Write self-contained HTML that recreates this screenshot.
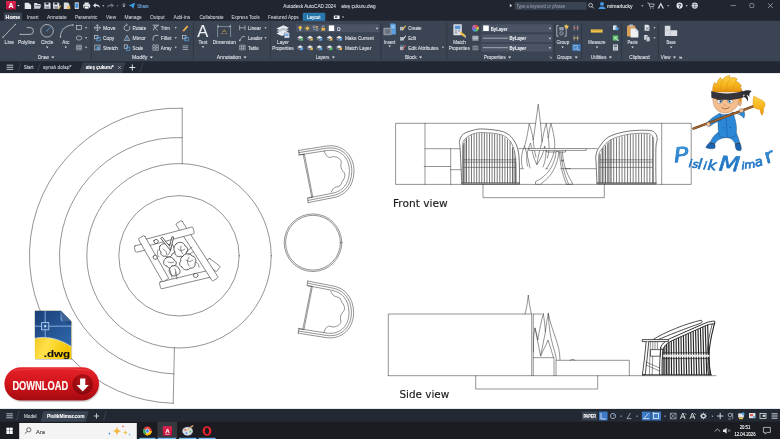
<!DOCTYPE html>
<html lang="tr">
<head>
<meta charset="utf-8">
<title>Autodesk AutoCAD 2024 - ateş çukuru.dwg</title>
<style>
html,body{margin:0;padding:0;background:#fff;overflow:hidden}
body{width:780px;height:439px;position:relative;font-family:'Liberation Sans', Arial, sans-serif}
svg{position:absolute;left:-4px;top:-4px;display:block;will-change:transform;filter:blur(0.35px)}
svg text{font-family:'Liberation Sans', Arial, sans-serif;white-space:pre}

</style>
</head>
<body>
<svg width="788" height="447" viewBox="-4 -4 788 447">
<rect x="-4.00" y="-4.00" width="788.00" height="77.10" fill="#222833" />
<rect x="-4.00" y="-4.00" width="788.00" height="26.00" fill="#20252f" />
<rect x="-4.00" y="20.70" width="788.00" height="40.60" fill="#3b4453" />
<defs><linearGradient id="acad" x1="0" y1="0" x2="0" y2="1"><stop offset="0" stop-color="#e4254f"/><stop offset="1" stop-color="#b80f3a"/></linearGradient></defs>
<rect x="6.10" y="1.00" width="9.70" height="8.60" fill="url(#acad)" />
<text x="11.00" y="7.88" font-size="7" fill="#ffffff" font-weight="bold" text-anchor="middle" stroke="#ffffff" stroke-width="0.1" >A</text>
<path d="M17.20 4.94 L19.60 4.94 L18.40 6.50 Z" fill="#e8eaee"/>
<path d="M24.7 2.7 h4 l2.4 2.2 v4.2 h-6.4 z" stroke="none" stroke-width="0" fill="#e3e6ea" />
<path d="M34.2 3.1 h2.6 l0.8 1 h3 v1 h-5 l-1.4 3.2 z" stroke="none" stroke-width="0" fill="#e3e6ea" />
<path d="M35.0 5.5 h6.4 l-1.6 3.2 h-6.2 z" stroke="none" stroke-width="0" fill="#c9cdd3" />
<path d="M44.3 2.6 h5.2 l1 1 v5.2 h-6.2 z" stroke="none" stroke-width="0" fill="#e3e6ea" />
<rect x="45.60" y="2.60" width="3.00" height="2.00" fill="#20252f" />
<rect x="45.50" y="6.10" width="3.80" height="2.70" fill="#8c94a0" />
<path d="M53.1 2.6 h5.2 l1 1 v5.2 h-6.2 z" stroke="none" stroke-width="0" fill="#e3e6ea" />
<rect x="54.40" y="2.60" width="3.00" height="2.00" fill="#20252f" />
<rect x="54.30" y="6.10" width="3.80" height="2.70" fill="#8c94a0" />
<path d="M57.7 8.7 l2.6 -3.4 l0.9 0.7 l-2.6 3.4 z" stroke="none" stroke-width="0" fill="#f0c060" />
<path d="M63.8 2.5 h4 l1.6 1.6 v4.8 h-5.6 z" stroke="none" stroke-width="0" fill="#d8dbe0" />
<rect x="67.20" y="5.90" width="3.00" height="3.20" fill="#e9b85a" />
<rect x="74.70" y="2.30" width="4.20" height="6.80" fill="#cfd3d9" rx="0.6"/>
<rect x="75.40" y="3.30" width="2.80" height="4.40" fill="#3d8ed8" />
<rect x="84.60" y="2.50" width="4.20" height="2.20" fill="#e3e6ea" />
<rect x="83.20" y="4.30" width="7.00" height="3.40" fill="#e3e6ea" rx="0.6"/>
<rect x="84.60" y="6.30" width="4.20" height="2.60" fill="#ffffff" stroke="#1f2532" stroke-width="0.4"/>
<path d="M93.0 5.4 l2.6 -2.4 v1.5 c3.4 0 4.2 1.6 4.2 3.4 c-0.9 -1.4 -2 -1.8 -4.2 -1.8 v1.6 z" stroke="none" stroke-width="0" fill="#e3e6ea" />
<path d="M102.30 5.35 L104.30 5.35 L103.30 6.65 Z" fill="#c9ced6"/>
<path d="M114.0 5.4 l-2.6 -2.4 v1.5 c-3.4 0 -4.2 1.6 -4.2 3.4 c0.9 -1.4 2 -1.8 4.2 -1.8 v1.6 z" stroke="none" stroke-width="0" fill="#6b7380" />
<path d="M116.40 5.35 L118.40 5.35 L117.40 6.65 Z" fill="#7a8290"/>
<path d="M122.50 5.43 L125.30 5.43 L123.90 7.25 Z" fill="#e3e6ea"/>
<line x1="122.50" y1="4.10" x2="125.30" y2="4.10" stroke="#e3e6ea" stroke-width="0.6" />
<path d="M128.6 5.4 l6.6 -3 l-2 6.6 l-1.6 -2.4 z M128.6 5.4 l3 1.2" stroke="none" stroke-width="0" fill="#3d9be0" />
<text x="137.20" y="7.90" font-size="6.2" fill="#74b2ea" textLength="11.60" lengthAdjust="spacingAndGlyphs" stroke="#74b2ea" stroke-width="0.1" >Share</text>
<text x="283.30" y="7.77" font-size="6.1" fill="#dcdfe4" textLength="52.60" lengthAdjust="spacingAndGlyphs" stroke="#dcdfe4" stroke-width="0.1" >Autodesk AutoCAD 2024</text>
<text x="341.30" y="7.77" font-size="6.1" fill="#dcdfe4" textLength="34.40" lengthAdjust="spacingAndGlyphs" stroke="#dcdfe4" stroke-width="0.1" >ateş çukuru.dwg</text>
<path d="M509.8 3.8 l2.4 1.8 l-2.4 1.8 z" stroke="none" stroke-width="0" fill="#c9ced6" />
<rect x="514.60" y="1.90" width="72.00" height="7.90" fill="#3a4352" />
<text x="516.20" y="7.69" font-size="5.6" fill="#8d95a3" textLength="49.00" lengthAdjust="spacingAndGlyphs" font-style="italic" stroke="#8d95a3" stroke-width="0.1" >Type a keyword or phrase</text>
<circle cx="590.60" cy="5.20" r="1.90" stroke="#d5d9df" stroke-width="0.8" fill="none" />
<line x1="592.00" y1="6.60" x2="593.80" y2="8.40" stroke="#d5d9df" stroke-width="0.9" />
<circle cx="602.00" cy="3.90" r="1.90" stroke="none" stroke-width="0" fill="#4a9be6" />
<path d="M598.4 9 c0 -3.4 7.2 -3.4 7.2 0 z" stroke="none" stroke-width="0" fill="#4a9be6" />
<text x="607.00" y="7.87" font-size="6.1" fill="#e6e8ec" textLength="25.60" lengthAdjust="spacingAndGlyphs" stroke="#e6e8ec" stroke-width="0.1" >mimarlucky</text>
<path d="M641.20 5.29 L643.40 5.29 L642.30 6.73 Z" fill="#c9ced6"/>
<path d="M647.4 3 h1.4 l1 3.6 h3.6 l0.8 -2.6 h-5" stroke="#d5d9df" stroke-width="0.7" fill="none" />
<circle cx="650.40" cy="8.00" r="0.60" stroke="none" stroke-width="0" fill="#d5d9df" />
<circle cx="653.00" cy="8.00" r="0.60" stroke="none" stroke-width="0" fill="#d5d9df" />
<path d="M657.6 8.4 l3.2 -6 l3.2 6 h-1.5 l-1.7 -3.4 l-1.7 3.4 z" stroke="none" stroke-width="0" fill="#d5d9df" />
<path d="M667.10 5.29 L669.30 5.29 L668.20 6.73 Z" fill="#c9ced6"/>
<circle cx="679.60" cy="5.60" r="3.10" stroke="none" stroke-width="0" fill="#e3e6ea" />
<text x="679.60" y="7.55" font-size="5.2" fill="#20252f" font-weight="bold" text-anchor="middle" stroke="#20252f" stroke-width="0.1" >?</text>
<path d="M685.60 5.29 L687.80 5.29 L686.70 6.73 Z" fill="#c9ced6"/>
<circle cx="694.80" cy="5.60" r="3.10" stroke="none" stroke-width="0" fill="#dfe3e8" />
<path d="M692 4.6 h5.4 M692 6.8 h5.4 M694.8 2.6 v6" stroke="#1f2532" stroke-width="0.4" fill="none" />
<line x1="730.60" y1="5.60" x2="736.00" y2="5.60" stroke="#b9bec6" stroke-width="0.6" />
<rect x="749.80" y="3.60" width="4.00" height="4.00" fill="none" stroke="#b9bec6" stroke-width="0.6" rx="0.8"/>
<path d="M768 3.2 l4.8 4.8 M772.8 3.2 l-4.8 4.8" stroke="#c9ced6" stroke-width="0.6" fill="none" />
<rect x="3.80" y="12.60" width="18.20" height="8.20" fill="#3b4453" rx="0.8"/>
<text x="5.60" y="19.20" font-size="6.2" fill="#ffffff" font-weight="bold" textLength="14.60" lengthAdjust="spacingAndGlyphs" stroke="#ffffff" stroke-width="0.1" >Home</text>
<text x="27.00" y="19.20" font-size="6.2" fill="#c5cad3" textLength="11.50" lengthAdjust="spacingAndGlyphs" stroke="#c5cad3" stroke-width="0.1" >Insert</text>
<text x="47.00" y="19.20" font-size="6.2" fill="#c5cad3" textLength="19.70" lengthAdjust="spacingAndGlyphs" stroke="#c5cad3" stroke-width="0.1" >Annotate</text>
<text x="74.90" y="19.20" font-size="6.2" fill="#c5cad3" textLength="22.50" lengthAdjust="spacingAndGlyphs" stroke="#c5cad3" stroke-width="0.1" >Parametric</text>
<text x="106.00" y="19.20" font-size="6.2" fill="#c5cad3" textLength="10.00" lengthAdjust="spacingAndGlyphs" stroke="#c5cad3" stroke-width="0.1" >View</text>
<text x="124.40" y="19.20" font-size="6.2" fill="#c5cad3" textLength="17.40" lengthAdjust="spacingAndGlyphs" stroke="#c5cad3" stroke-width="0.1" >Manage</text>
<text x="150.00" y="19.20" font-size="6.2" fill="#c5cad3" textLength="14.60" lengthAdjust="spacingAndGlyphs" stroke="#c5cad3" stroke-width="0.1" >Output</text>
<text x="173.60" y="19.20" font-size="6.2" fill="#c5cad3" textLength="16.70" lengthAdjust="spacingAndGlyphs" stroke="#c5cad3" stroke-width="0.1" >Add-ins</text>
<text x="199.40" y="19.20" font-size="6.2" fill="#c5cad3" textLength="24.20" lengthAdjust="spacingAndGlyphs" stroke="#c5cad3" stroke-width="0.1" >Collaborate</text>
<text x="231.50" y="19.20" font-size="6.2" fill="#c5cad3" textLength="28.20" lengthAdjust="spacingAndGlyphs" stroke="#c5cad3" stroke-width="0.1" >Express Tools</text>
<text x="268.00" y="19.20" font-size="6.2" fill="#c5cad3" textLength="30.70" lengthAdjust="spacingAndGlyphs" stroke="#c5cad3" stroke-width="0.1" >Featured Apps</text>
<rect x="303.00" y="13.00" width="22.00" height="7.80" fill="#2676ac" rx="0.8" stroke="#3d8cc4" stroke-width="0.4"/>
<text x="307.00" y="19.20" font-size="6.2" fill="#ffffff" textLength="13.60" lengthAdjust="spacingAndGlyphs" stroke="#ffffff" stroke-width="0.1" >Layout</text>
<rect x="333.80" y="15.40" width="5.80" height="3.60" fill="#f0f2f5" rx="0.5"/>
<rect x="335.00" y="16.40" width="2.20" height="1.40" fill="#2a303c" />
<path d="M341.90 16.59 L344.10 16.59 L343.00 18.02 Z" fill="#c9ced6"/>
<line x1="3.00" y1="37.20" x2="15.40" y2="24.40" stroke="#c3c9d2" stroke-width="0.8" />
<circle cx="3.00" cy="37.20" r="0.70" stroke="none" stroke-width="0" fill="#c3c9d2" />
<circle cx="15.40" cy="24.40" r="0.70" stroke="none" stroke-width="0" fill="#c3c9d2" />
<text x="4.60" y="44.00" font-size="6.2" fill="#dfe3e9" textLength="9.50" lengthAdjust="spacingAndGlyphs" stroke="#dfe3e9" stroke-width="0.1" >Line</text>
<path d="M20.4 34.4 h9.6 a3.4 3.4 0 0 0 0 -6.8 h-3.4" stroke="#c3c9d2" stroke-width="0.8" fill="none" />
<circle cx="20.40" cy="34.40" r="0.70" stroke="none" stroke-width="0" fill="#c3c9d2" />
<text x="18.00" y="44.00" font-size="6.2" fill="#dfe3e9" textLength="17.20" lengthAdjust="spacingAndGlyphs" stroke="#dfe3e9" stroke-width="0.1" >Polyline</text>
<circle cx="47.00" cy="30.80" r="6.30" stroke="#c3c9d2" stroke-width="0.8" fill="none" />
<line x1="47.00" y1="30.80" x2="51.20" y2="26.40" stroke="#58a6e8" stroke-width="0.7" />
<circle cx="47.00" cy="30.80" r="0.60" stroke="none" stroke-width="0" fill="#58a6e8" />
<text x="41.10" y="44.00" font-size="6.2" fill="#dfe3e9" textLength="12.20" lengthAdjust="spacingAndGlyphs" stroke="#dfe3e9" stroke-width="0.1" >Circle</text>
<path d="M45.95 46.51 L48.45 46.51 L47.20 48.14 Z" fill="#dfe3e8"/>
<path d="M60.4 37 C60.4 30 66 25 73 25" stroke="#c3c9d2" stroke-width="0.8" fill="none" stroke-dasharray="none"/>
<circle cx="60.40" cy="37.00" r="0.70" stroke="none" stroke-width="0" fill="#c3c9d2" />
<circle cx="73.00" cy="25.00" r="0.70" stroke="none" stroke-width="0" fill="#c3c9d2" />
<circle cx="63.00" cy="28.60" r="0.60" stroke="none" stroke-width="0" fill="#58a6e8" />
<text x="62.30" y="44.00" font-size="6.2" fill="#dfe3e9" textLength="7.00" lengthAdjust="spacingAndGlyphs" stroke="#dfe3e9" stroke-width="0.1" >Arc</text>
<path d="M64.55 46.51 L67.05 46.51 L65.80 48.14 Z" fill="#dfe3e8"/>
<rect x="76.40" y="25.60" width="5.00" height="4.00" fill="none" stroke="#c3c9d2" stroke-width="0.7"/>
<path d="M84.95 27.17 L87.25 27.17 L86.10 28.66 Z" fill="#d5d9df"/>
<ellipse cx="79" cy="38.0" rx="2.8" ry="2.1" fill="none" stroke="#c3c9d2" stroke-width="0.7"/>
<path d="M84.95 37.37 L87.25 37.37 L86.10 38.86 Z" fill="#d5d9df"/>
<path d="M76.4 45.1 h5.2 v4.8 h-5.2 z M76.4 46.7 h5.2 M76.4 48.3 h5.2 M78 45.1 v4.8 M80 45.1 v4.8" stroke="#c3c9d2" stroke-width="0.5" fill="none" />
<path d="M84.95 46.87 L87.25 46.87 L86.10 48.36 Z" fill="#d5d9df"/>
<text x="38.00" y="59.40" font-size="6.2" fill="#dfe3e9" textLength="10.80" lengthAdjust="spacingAndGlyphs" stroke="#dfe3e9" stroke-width="0.1" >Draw</text>
<path d="M51.25 56.55 L54.35 56.55 L52.80 58.56 Z" fill="#dfe3e8"/>
<line x1="91.20" y1="22.50" x2="91.20" y2="60.00" stroke="#2c3340" stroke-width="0.8" />
<path d="M97.4 24.8 v6 M94.4 27.8 h6 M96.30000000000001 25.8 l1.1 -1.2 l1.1 1.2 M96.30000000000001 29.8 l1.1 1.2 l1.1 -1.2 M95.4 26.7 l-1.2 1.1 l1.2 1.1 M99.4 26.7 l1.2 1.1 l-1.2 1.1" stroke="#c3c9d2" stroke-width="0.8" fill="none" />
<text x="103.00" y="30.00" font-size="6.2" fill="#dfe3e9" textLength="12.60" lengthAdjust="spacingAndGlyphs" stroke="#dfe3e9" stroke-width="0.1" >Move</text>
<rect x="94.60" y="35.40" width="3.40" height="3.40" fill="none" stroke="#c3c9d2" stroke-width="0.7"/>
<rect x="96.80" y="37.60" width="3.40" height="3.20" fill="none" stroke="#58a6e8" stroke-width="0.7"/>
<text x="103.00" y="40.20" font-size="6.2" fill="#dfe3e9" textLength="11.20" lengthAdjust="spacingAndGlyphs" stroke="#dfe3e9" stroke-width="0.1" >Copy</text>
<rect x="94.80" y="45.10" width="5.20" height="4.80" fill="none" stroke="#c3c9d2" stroke-width="0.7"/>
<rect x="96.60" y="46.70" width="2.60" height="2.60" fill="#58a6e8" />
<text x="103.00" y="49.70" font-size="6.2" fill="#dfe3e9" textLength="15.00" lengthAdjust="spacingAndGlyphs" stroke="#dfe3e9" stroke-width="0.1" >Stretch</text>
<path d="M129.4 26.2 a2.9 2.9 0 1 1 -2.4 -1.3" stroke="#c3c9d2" stroke-width="0.8" fill="none" />
<path d="M126.2 23.6 l1.4 1.3 l-1.6 1" stroke="#c3c9d2" stroke-width="0.6" fill="none" />
<text x="132.60" y="30.00" font-size="6.2" fill="#dfe3e9" textLength="13.60" lengthAdjust="spacingAndGlyphs" stroke="#dfe3e9" stroke-width="0.1" >Rotate</text>
<path d="M124.2 40.4 l2.8 -5 l2.8 5 z" stroke="#c3c9d2" stroke-width="0.7" fill="none" />
<line x1="127.00" y1="37.00" x2="127.00" y2="40.40" stroke="#58a6e8" stroke-width="0.7" />
<text x="132.60" y="40.20" font-size="6.2" fill="#dfe3e9" textLength="13.20" lengthAdjust="spacingAndGlyphs" stroke="#dfe3e9" stroke-width="0.1" >Mirror</text>
<rect x="124.20" y="44.90" width="3.40" height="3.40" fill="none" stroke="#c3c9d2" stroke-width="0.7"/>
<rect x="126.40" y="47.10" width="3.40" height="3.20" fill="none" stroke="#58a6e8" stroke-width="0.7"/>
<text x="132.60" y="49.70" font-size="6.2" fill="#dfe3e9" textLength="10.60" lengthAdjust="spacingAndGlyphs" stroke="#dfe3e9" stroke-width="0.1" >Scale</text>
<path d="M152.6 25.2 h6 l-3.6 2.4 l2.6 3 M155 25.2 l-1.6 5.2" stroke="#c3c9d2" stroke-width="0.8" fill="none" />
<text x="160.80" y="30.00" font-size="6.2" fill="#dfe3e9" textLength="9.00" lengthAdjust="spacingAndGlyphs" stroke="#dfe3e9" stroke-width="0.1" >Trim</text>
<path d="M174.55 27.17 L176.85 27.17 L175.70 28.66 Z" fill="#d5d9df"/>
<path d="M153.0 40.6 v-2.2 a3 3 0 0 1 3 -3 h2.4" stroke="#c3c9d2" stroke-width="0.8" fill="none" />
<text x="160.80" y="40.20" font-size="6.2" fill="#dfe3e9" textLength="10.60" lengthAdjust="spacingAndGlyphs" stroke="#dfe3e9" stroke-width="0.1" >Fillet</text>
<path d="M174.55 37.37 L176.85 37.37 L175.70 38.86 Z" fill="#d5d9df"/>
<path d="M152.79999999999998 44.9 h2.4 v2.4 h-2.4 z M156.0 44.9 h2.4 v2.4 h-2.4 z M152.79999999999998 47.9 h2.4 v2.4 h-2.4 z M156.0 47.9 h2.4 v2.4 h-2.4 z" stroke="#c3c9d2" stroke-width="0.6" fill="none" />
<text x="160.80" y="49.70" font-size="6.2" fill="#dfe3e9" textLength="10.60" lengthAdjust="spacingAndGlyphs" stroke="#dfe3e9" stroke-width="0.1" >Array</text>
<path d="M174.55 46.87 L176.85 46.87 L175.70 48.36 Z" fill="#d5d9df"/>
<path d="M182.6 30.400000000000002 l4.4 -5 l1.4 1.2 l-4.4 5 z" stroke="none" stroke-width="0" fill="#f0b44a" />
<path d="M182.6 30.400000000000002 l-0.6 1 l1.2 -0.2" stroke="none" stroke-width="0" fill="#e86a5a" />
<rect x="182.60" y="35.40" width="3.40" height="3.40" fill="none" stroke="#c3c9d2" stroke-width="0.7"/>
<rect x="184.80" y="37.60" width="3.40" height="3.20" fill="none" stroke="#58a6e8" stroke-width="0.7"/>
<path d="M182.6 45.9 h5.6 M182.6 47.7 h5.6 M182.6 49.5 h5.6" stroke="#c3c9d2" stroke-width="0.7" fill="none" />
<text x="132.00" y="59.40" font-size="6.2" fill="#dfe3e9" textLength="15.40" lengthAdjust="spacingAndGlyphs" stroke="#dfe3e9" stroke-width="0.1" >Modify</text>
<path d="M149.85 56.55 L152.95 56.55 L151.40 58.56 Z" fill="#dfe3e8"/>
<line x1="193.40" y1="22.50" x2="193.40" y2="60.00" stroke="#2c3340" stroke-width="0.8" />
<text x="202.80" y="37.06" font-size="16.5" fill="#eef0f3" text-anchor="middle" stroke="#eef0f3" stroke-width="0.1" >A</text>
<text x="198.60" y="44.00" font-size="6.2" fill="#dfe3e9" textLength="8.80" lengthAdjust="spacingAndGlyphs" stroke="#dfe3e9" stroke-width="0.1" >Text</text>
<path d="M201.75 46.31 L204.25 46.31 L203.00 47.94 Z" fill="#dfe3e8"/>
<path d="M217.6 24.6 v12.4 M230.6 24.6 v12.4 M217.6 26.6 h13" stroke="#9aa3b0" stroke-width="0.7" fill="none" />
<path d="M219 25.6 l-1.4 1 l1.4 1 z M229.2 25.6 l1.4 1 l-1.4 1 z" stroke="none" stroke-width="0" fill="#c3c9d2" />
<path d="M222.6 30.8 l1 1.2 M224.2 29.6 v1.6 M225.8 30.8 l-1 1.2 M221.6 33.4 h1.6 M225.4 33.4 h1.6" stroke="#f0c24b" stroke-width="0.7" fill="none" />
<text x="212.80" y="44.00" font-size="6.2" fill="#dfe3e9" textLength="23.10" lengthAdjust="spacingAndGlyphs" stroke="#dfe3e9" stroke-width="0.1" >Dimension</text>
<path d="M239.6 25.400000000000002 v4.8 M245 25.400000000000002 v4.8 M239.6 27.8 h5.4" stroke="#c3c9d2" stroke-width="0.7" fill="none" />
<text x="248.00" y="30.00" font-size="6.2" fill="#dfe3e9" textLength="13.00" lengthAdjust="spacingAndGlyphs" stroke="#dfe3e9" stroke-width="0.1" >Linear</text>
<path d="M264.35 27.17 L266.65 27.17 L265.50 28.66 Z" fill="#d5d9df"/>
<path d="M239.8 40.4 l2.4 -3.8 h3" stroke="#c3c9d2" stroke-width="0.7" fill="none" />
<circle cx="239.80" cy="40.40" r="0.80" stroke="none" stroke-width="0" fill="#c3c9d2" />
<text x="248.00" y="40.20" font-size="6.2" fill="#dfe3e9" textLength="14.40" lengthAdjust="spacingAndGlyphs" stroke="#dfe3e9" stroke-width="0.1" >Leader</text>
<path d="M264.35 37.37 L266.65 37.37 L265.50 38.86 Z" fill="#d5d9df"/>
<path d="M239.6 45.1 h5.6 v4.8 h-5.6 z M239.6 46.7 h5.6 M239.6 48.3 h5.6 M241.5 45.1 v4.8 M243.4 45.1 v4.8" stroke="#c3c9d2" stroke-width="0.5" fill="none" />
<text x="248.00" y="49.70" font-size="6.2" fill="#dfe3e9" textLength="10.80" lengthAdjust="spacingAndGlyphs" stroke="#dfe3e9" stroke-width="0.1" >Table</text>
<text x="216.70" y="59.40" font-size="6.2" fill="#dfe3e9" textLength="24.30" lengthAdjust="spacingAndGlyphs" stroke="#dfe3e9" stroke-width="0.1" >Annotation</text>
<path d="M243.45 56.55 L246.55 56.55 L245.00 58.56 Z" fill="#dfe3e8"/>
<line x1="270.40" y1="22.50" x2="270.40" y2="60.00" stroke="#2c3340" stroke-width="0.8" />
<path d="M276.4 28.6 l7 -3.4 l5.6 2.6 l-7 3.4 z" stroke="none" stroke-width="0" fill="#e8ebef" />
<path d="M276.4 31 l7 -3.4 l5.6 2.6 l-7 3.4 z" stroke="none" stroke-width="0" fill="#b9c0ca" />
<path d="M276.4 33.4 l7 -3.4 l5.6 2.6 l-7 3.4 z" stroke="none" stroke-width="0" fill="#e8ebef" />
<rect x="284.20" y="33.00" width="5.20" height="5.00" fill="#dfe3e8" stroke="#4b6ea0" stroke-width="0.5"/>
<rect x="285.20" y="34.40" width="3.20" height="1.40" fill="#4a8fd8" />
<text x="282.90" y="44.00" font-size="6.2" fill="#dfe3e9" text-anchor="middle" textLength="11.60" lengthAdjust="spacingAndGlyphs" stroke="#dfe3e9" stroke-width="0.1" >Layer</text>
<text x="272.30" y="50.30" font-size="6.2" fill="#dfe3e9" textLength="21.30" lengthAdjust="spacingAndGlyphs" stroke="#dfe3e9" stroke-width="0.1" >Properties</text>
<rect x="296.00" y="24.30" width="83.60" height="7.80" fill="#4a5465" />
<circle cx="300.20" cy="27.60" r="1.70" stroke="none" stroke-width="0" fill="#f0c24b" />
<rect x="299.40" y="29.20" width="1.60" height="1.40" fill="#cfd3d9" />
<circle cx="307.40" cy="28.20" r="1.50" stroke="none" stroke-width="0" fill="#f0c24b" />
<path d="M304.59999999999997 28.2 h1 M309.2 28.2 h1 M307.4 25.4 v1 M307.4 30.0 v1 M305.4 26.2 l0.7 0.7 M308.7 29.5 l0.7 0.7 M305.4 30.2 l0.7 -0.7 M308.7 26.9 l0.7 -0.7" stroke="#f0c24b" stroke-width="0.5" fill="none" />
<path d="M313 26 h2 v2 h-2 z M316 28.4 h2 v2 h-2 z M313 29.6 h2" stroke="#c3c9d2" stroke-width="0.5" fill="none" />
<rect x="316.00" y="26.00" width="1.80" height="1.60" fill="#e7b24c" />
<rect x="321.40" y="27.80" width="3.60" height="2.80" fill="#e7b24c" />
<path d="M322.2 27.8 v-1 a1 1 0 0 1 2 0" stroke="#c3c9d2" stroke-width="0.6" fill="none" />
<rect x="328.80" y="25.40" width="5.40" height="5.60" fill="#ffffff" />
<text x="337.00" y="30.50" font-size="6.2" fill="#eef0f3" stroke="#eef0f3" stroke-width="0.1" >0</text>
<path d="M375.70 27.68 L378.30 27.68 L377.00 29.38 Z" fill="#d5d9df"/>
<path d="M297.2 37.4 l3 -1.6 l3 1.6 l-3 1.6 z" stroke="none" stroke-width="0" fill="#dfe3e8" />
<path d="M297.2 38.8 l3 1.6 l3 -1.6" stroke="#c3c9d2" stroke-width="0.5" fill="none" />
<rect x="300.60" y="38.20" width="2.40" height="2.40" fill="#5cc26a" />
<path d="M297.2 46.9 l3 -1.6 l3 1.6 l-3 1.6 z" stroke="none" stroke-width="0" fill="#dfe3e8" />
<path d="M297.2 48.3 l3 1.6 l3 -1.6" stroke="#c3c9d2" stroke-width="0.5" fill="none" />
<rect x="300.60" y="47.70" width="2.40" height="2.40" fill="#58a6e8" />
<path d="M307.0 37.4 l3 -1.6 l3 1.6 l-3 1.6 z" stroke="none" stroke-width="0" fill="#dfe3e8" />
<path d="M307.0 38.8 l3 1.6 l3 -1.6" stroke="#c3c9d2" stroke-width="0.5" fill="none" />
<rect x="310.40" y="38.20" width="2.40" height="2.40" fill="#e7b24c" />
<path d="M307.0 46.9 l3 -1.6 l3 1.6 l-3 1.6 z" stroke="none" stroke-width="0" fill="#dfe3e8" />
<path d="M307.0 48.3 l3 1.6 l3 -1.6" stroke="#c3c9d2" stroke-width="0.5" fill="none" />
<rect x="310.40" y="47.70" width="2.40" height="2.40" fill="#e7b24c" />
<path d="M316.4 37.4 l3 -1.6 l3 1.6 l-3 1.6 z" stroke="none" stroke-width="0" fill="#dfe3e8" />
<path d="M316.4 38.8 l3 1.6 l3 -1.6" stroke="#c3c9d2" stroke-width="0.5" fill="none" />
<rect x="319.80" y="38.20" width="2.40" height="2.40" fill="#58a6e8" />
<path d="M316.4 46.9 l3 -1.6 l3 1.6 l-3 1.6 z" stroke="none" stroke-width="0" fill="#dfe3e8" />
<path d="M316.4 48.3 l3 1.6 l3 -1.6" stroke="#c3c9d2" stroke-width="0.5" fill="none" />
<rect x="319.80" y="47.70" width="2.40" height="2.40" fill="#58a6e8" />
<path d="M326.59999999999997 37.4 l3 -1.6 l3 1.6 l-3 1.6 z" stroke="none" stroke-width="0" fill="#dfe3e8" />
<path d="M326.59999999999997 38.8 l3 1.6 l3 -1.6" stroke="#c3c9d2" stroke-width="0.5" fill="none" />
<rect x="330.00" y="38.20" width="2.40" height="2.40" fill="#e7b24c" />
<path d="M326.59999999999997 46.9 l3 -1.6 l3 1.6 l-3 1.6 z" stroke="none" stroke-width="0" fill="#dfe3e8" />
<path d="M326.59999999999997 48.3 l3 1.6 l3 -1.6" stroke="#c3c9d2" stroke-width="0.5" fill="none" />
<rect x="330.00" y="47.70" width="2.40" height="2.40" fill="#5cc26a" />
<path d="M336.2 37.4 l3 -1.6 l3 1.6 l-3 1.6 z" stroke="none" stroke-width="0" fill="#dfe3e8" />
<path d="M336.2 38.8 l3 1.6 l3 -1.6" stroke="#c3c9d2" stroke-width="0.5" fill="none" />
<rect x="339.60" y="38.20" width="2.40" height="2.40" fill="#58a6e8" />
<path d="M336.2 46.9 l3 -1.6 l3 1.6 l-3 1.6 z" stroke="none" stroke-width="0" fill="#dfe3e8" />
<path d="M336.2 48.3 l3 1.6 l3 -1.6" stroke="#c3c9d2" stroke-width="0.5" fill="none" />
<rect x="339.60" y="47.70" width="2.40" height="2.40" fill="#e7b24c" />
<text x="344.90" y="40.20" font-size="6.2" fill="#dfe3e9" textLength="28.90" lengthAdjust="spacingAndGlyphs" stroke="#dfe3e9" stroke-width="0.1" >Make Current</text>
<text x="344.90" y="49.70" font-size="6.2" fill="#dfe3e9" textLength="26.40" lengthAdjust="spacingAndGlyphs" stroke="#dfe3e9" stroke-width="0.1" >Match Layer</text>
<text x="315.80" y="59.40" font-size="6.2" fill="#dfe3e9" textLength="13.40" lengthAdjust="spacingAndGlyphs" stroke="#dfe3e9" stroke-width="0.1" >Layers</text>
<path d="M331.85 56.55 L334.95 56.55 L333.40 58.56 Z" fill="#dfe3e8"/>
<line x1="380.90" y1="22.50" x2="380.90" y2="60.00" stroke="#2c3340" stroke-width="0.8" />
<path d="M390.2 23.4 h4.2 l1.4 1.4 v9.6 h-5.6 z" stroke="none" stroke-width="0" fill="#5aa0e0" />
<rect x="391.20" y="25.60" width="3.60" height="0.70" fill="#cfe2f6" />
<rect x="391.20" y="27.40" width="3.60" height="0.70" fill="#cfe2f6" />
<rect x="383.40" y="27.80" width="8.20" height="7.40" fill="#8d96a3" rx="0.8"/>
<rect x="384.80" y="29.20" width="5.40" height="4.60" fill="#69727f" />
<text x="383.80" y="44.00" font-size="6.2" fill="#dfe3e9" textLength="11.60" lengthAdjust="spacingAndGlyphs" stroke="#dfe3e9" stroke-width="0.1" >Insert</text>
<path d="M388.45 45.51 L390.95 45.51 L389.70 47.14 Z" fill="#dfe3e8"/>
<rect x="400.00" y="26.80" width="3.60" height="3.60" fill="#aeb6c2" />
<path d="M402.20000000000005 29.2 l3.2 -4 l0.8 0.7 l-3.2 4 z" stroke="none" stroke-width="0" fill="#f0c24b" />
<text x="408.20" y="30.00" font-size="6.2" fill="#dfe3e9" textLength="13.40" lengthAdjust="spacingAndGlyphs" stroke="#dfe3e9" stroke-width="0.1" >Create</text>
<rect x="400.00" y="37.00" width="3.60" height="3.60" fill="#aeb6c2" />
<path d="M402.20000000000005 39.4 l3.2 -4 l0.8 0.7 l-3.2 4 z" stroke="none" stroke-width="0" fill="#e8ebef" />
<text x="408.20" y="40.20" font-size="6.2" fill="#dfe3e9" textLength="7.80" lengthAdjust="spacingAndGlyphs" stroke="#dfe3e9" stroke-width="0.1" >Edit</text>
<rect x="400.00" y="46.50" width="3.60" height="3.60" fill="#aeb6c2" />
<path d="M402.20000000000005 48.9 l3.2 -4 l0.8 0.7 l-3.2 4 z" stroke="none" stroke-width="0" fill="#e0605a" />
<path d="M400.0 44.7 l2 1.6 l2 -1.6" stroke="#58a6e8" stroke-width="0.7" fill="none" />
<text x="408.20" y="49.70" font-size="6.2" fill="#dfe3e9" textLength="30.30" lengthAdjust="spacingAndGlyphs" stroke="#dfe3e9" stroke-width="0.1" >Edit Attributes</text>
<path d="M441.75 46.87 L444.05 46.87 L442.90 48.36 Z" fill="#d5d9df"/>
<text x="404.90" y="59.40" font-size="6.2" fill="#dfe3e9" textLength="11.80" lengthAdjust="spacingAndGlyphs" stroke="#dfe3e9" stroke-width="0.1" >Block</text>
<path d="M419.05 56.55 L422.15 56.55 L420.60 58.56 Z" fill="#dfe3e8"/>
<line x1="446.80" y1="22.50" x2="446.80" y2="60.00" stroke="#2c3340" stroke-width="0.8" />
<rect x="453.40" y="24.20" width="8.40" height="11.00" fill="#dfe3e8" rx="0.6"/>
<rect x="454.80" y="25.60" width="5.60" height="3.60" fill="#5a96d6" />
<rect x="454.80" y="30.40" width="2.40" height="1.00" fill="#7b8594" />
<rect x="458.00" y="30.40" width="2.40" height="1.00" fill="#7b8594" />
<rect x="454.80" y="32.40" width="2.40" height="1.00" fill="#7b8594" />
<path d="M459.6 33.6 l4.6 3.4 l1.4 -1.8 l-4.6 -3.4 z" stroke="none" stroke-width="0" fill="#f0c24b" />
<path d="M464.2 37 l1.6 1 l-0.2 -2.8" stroke="none" stroke-width="0" fill="#e8ebef" />
<text x="459.50" y="44.00" font-size="6.2" fill="#dfe3e9" text-anchor="middle" textLength="12.60" lengthAdjust="spacingAndGlyphs" stroke="#dfe3e9" stroke-width="0.1" >Match</text>
<text x="448.70" y="50.30" font-size="6.2" fill="#dfe3e9" textLength="21.00" lengthAdjust="spacingAndGlyphs" stroke="#dfe3e9" stroke-width="0.1" >Properties</text>
<path d="M475.4 28.2 L475.40 24.70 A3.5 3.5 0 0 1 478.43 26.45 Z" stroke="none" stroke-width="0" fill="#e94b4b" />
<path d="M475.4 28.2 L478.43 26.45 A3.5 3.5 0 0 1 478.43 29.95 Z" stroke="none" stroke-width="0" fill="#f0c24b" />
<path d="M475.4 28.2 L478.43 29.95 A3.5 3.5 0 0 1 475.40 31.70 Z" stroke="none" stroke-width="0" fill="#5cc26a" />
<path d="M475.4 28.2 L475.40 31.70 A3.5 3.5 0 0 1 472.37 29.95 Z" stroke="none" stroke-width="0" fill="#4aa3e8" />
<path d="M475.4 28.2 L472.37 29.95 A3.5 3.5 0 0 1 472.37 26.45 Z" stroke="none" stroke-width="0" fill="#9a5ad8" />
<path d="M475.4 28.2 L472.37 26.45 A3.5 3.5 0 0 1 475.40 24.70 Z" stroke="none" stroke-width="0" fill="#e86aa8" />
<rect x="472.40" y="35.60" width="6.00" height="5.20" fill="#9099a6" />
<path d="M472.4 37 h6 M472.4 38.6 h6" stroke="#dfe3e8" stroke-width="0.6" fill="none" />
<rect x="472.40" y="45.20" width="6.00" height="5.20" fill="#5d6674" />
<path d="M472.4 46.6 h6 M472.4 48.2 h6 M472.4 49.6 h6" stroke="#aab2be" stroke-width="0.4" fill="none" />
<rect x="481.30" y="24.30" width="71.00" height="7.80" fill="#4a5465" />
<rect x="481.30" y="34.40" width="71.00" height="7.60" fill="#4a5465" />
<rect x="481.30" y="43.90" width="71.00" height="7.60" fill="#4a5465" />
<rect x="483.20" y="25.40" width="5.60" height="5.60" fill="#ffffff" />
<text x="490.80" y="30.50" font-size="6.2" fill="#f2f4f6" font-weight="bold" textLength="16.60" lengthAdjust="spacingAndGlyphs" stroke="#f2f4f6" stroke-width="0.1" >ByLayer</text>
<line x1="483.00" y1="38.20" x2="508.00" y2="38.20" stroke="#e3e6ea" stroke-width="0.6" />
<text x="509.50" y="40.40" font-size="6.2" fill="#f2f4f6" font-weight="bold" textLength="16.60" lengthAdjust="spacingAndGlyphs" stroke="#f2f4f6" stroke-width="0.1" >ByLayer</text>
<line x1="483.00" y1="47.70" x2="508.00" y2="47.70" stroke="#e3e6ea" stroke-width="0.6" />
<text x="509.50" y="49.90" font-size="6.2" fill="#f2f4f6" font-weight="bold" textLength="16.60" lengthAdjust="spacingAndGlyphs" stroke="#f2f4f6" stroke-width="0.1" >ByLayer</text>
<path d="M548.70 27.68 L551.30 27.68 L550.00 29.38 Z" fill="#d5d9df"/>
<path d="M548.70 37.68 L551.30 37.68 L550.00 39.38 Z" fill="#d5d9df"/>
<path d="M548.70 47.18 L551.30 47.18 L550.00 48.88 Z" fill="#d5d9df"/>
<text x="483.80" y="59.40" font-size="6.2" fill="#dfe3e9" textLength="21.80" lengthAdjust="spacingAndGlyphs" stroke="#dfe3e9" stroke-width="0.1" >Properties</text>
<path d="M508.05 56.55 L511.15 56.55 L509.60 58.56 Z" fill="#dfe3e8"/>
<path d="M549.4 56.2 l2 2 M551.4 56.8 v1.4 h-1.4" stroke="#c3c9d2" stroke-width="0.5" fill="none" />
<line x1="554.40" y1="22.50" x2="554.40" y2="60.00" stroke="#2c3340" stroke-width="0.8" />
<path d="M558.6 25.6 h-1.8 v10.6 h1.8 M564.4 25.6 h1.8 v10.6 h-1.8" stroke="#c3c9d2" stroke-width="0.8" fill="none" />
<rect x="559.20" y="27.00" width="4.60" height="3.40" fill="#8f98a6" />
<circle cx="561.50" cy="33.40" r="1.90" stroke="#8f98a6" stroke-width="0.7" fill="#5d6674" />
<path d="M566.6 24 l0.8 1.8 l1.8 0.2 l-1.4 1.2 l0.4 1.8 l-1.6 -1 l-1.6 1 l0.4 -1.8 l-1.4 -1.2 l1.8 -0.2 z" stroke="none" stroke-width="0" fill="#f0c24b" />
<text x="556.40" y="44.00" font-size="6.2" fill="#dfe3e9" textLength="12.80" lengthAdjust="spacingAndGlyphs" stroke="#dfe3e9" stroke-width="0.1" >Group</text>
<path d="M561.35 46.51 L563.85 46.51 L562.60 48.14 Z" fill="#dfe3e8"/>
<path d="M574.2 25.2 v5.2 M577.6 25.2 v5.2" stroke="#c3c9d2" stroke-width="0.6" fill="none" />
<path d="M573 27.8 h6" stroke="#e0605a" stroke-width="0.7" fill="none" />
<path d="M574.2 35.4 v5.2 M577.6 35.4 v5.2" stroke="#c3c9d2" stroke-width="0.6" fill="none" />
<path d="M573 38.0 h6" stroke="#f0c24b" stroke-width="0.7" fill="none" />
<rect x="572.20" y="44.10" width="8.40" height="7.00" fill="#3d7fc4" />
<rect x="574.00" y="45.50" width="3.60" height="3.60" fill="none" stroke="#c3c9d2" stroke-width="0.6"/>
<path d="M576.4 47.5 l2.4 3 l0.2 -1.6" stroke="#c3c9d2" stroke-width="0.6" fill="none" />
<text x="557.00" y="59.40" font-size="6.2" fill="#dfe3e9" textLength="14.80" lengthAdjust="spacingAndGlyphs" stroke="#dfe3e9" stroke-width="0.1" >Groups</text>
<path d="M574.65 56.55 L577.75 56.55 L576.20 58.56 Z" fill="#dfe3e8"/>
<line x1="581.60" y1="22.50" x2="581.60" y2="60.00" stroke="#2c3340" stroke-width="0.8" />
<rect x="590.80" y="29.40" width="11.80" height="3.20" fill="#f0c24b" />
<path d="M592.6 29.4 v1.4 M594.6 29.4 v1.4 M596.6 29.4 v1.4 M598.6 29.4 v1.4 M600.6 29.4 v1.4" stroke="#8a6a1a" stroke-width="0.4" fill="none" />
<text x="588.20" y="44.00" font-size="6.2" fill="#dfe3e9" textLength="17.40" lengthAdjust="spacingAndGlyphs" stroke="#dfe3e9" stroke-width="0.1" >Measure</text>
<path d="M595.75 46.51 L598.25 46.51 L597.00 48.14 Z" fill="#dfe3e8"/>
<rect x="613.00" y="25.40" width="3.60" height="4.60" fill="#dfe3e8" />
<rect x="615.40" y="27.20" width="3.00" height="3.00" fill="#58a6e8" />
<rect x="612.80" y="35.40" width="5.40" height="5.20" fill="#5cc26a" />
<path d="M614 36.6 l2.8 2.8 M616.8 36.6 l-2.8 2.8" stroke="#ffffff" stroke-width="0.6" fill="none" />
<path d="M616.2 38.4 l2 2.6 l0.2 -1.4" stroke="#e8ebef" stroke-width="0.6" fill="none" />
<rect x="613.00" y="44.50" width="5.00" height="6.00" fill="#dfe3e8" rx="0.5"/>
<rect x="613.80" y="45.30" width="3.40" height="1.60" fill="#5d6674" />
<path d="M613.8 47.9 h3.4 M613.8 49.3 h3.4" stroke="#5d6674" stroke-width="0.6" fill="none" />
<text x="590.80" y="59.40" font-size="6.2" fill="#dfe3e9" textLength="15.60" lengthAdjust="spacingAndGlyphs" stroke="#dfe3e9" stroke-width="0.1" >Utilities</text>
<path d="M608.85 56.55 L611.95 56.55 L610.40 58.56 Z" fill="#dfe3e8"/>
<line x1="621.60" y1="22.50" x2="621.60" y2="60.00" stroke="#2c3340" stroke-width="0.8" />
<rect x="627.00" y="25.60" width="8.40" height="11.00" fill="#d9a05c" rx="0.8"/>
<rect x="629.40" y="24.40" width="3.60" height="2.00" fill="#b9c0ca" rx="0.5"/>
<path d="M630.6 28.6 h5.4 l2.4 2.4 v6.4 h-7.8 z" stroke="none" stroke-width="0" fill="#eef0f3" />
<path d="M636 28.6 v2.4 h2.4" stroke="#aab2be" stroke-width="0.5" fill="none" />
<text x="627.40" y="44.00" font-size="6.2" fill="#dfe3e9" textLength="10.40" lengthAdjust="spacingAndGlyphs" stroke="#dfe3e9" stroke-width="0.1" >Paste</text>
<path d="M631.35 46.51 L633.85 46.51 L632.60 48.14 Z" fill="#dfe3e8"/>
<path d="M644.6 24.8 h3.6 l1.2 1.2 v4.8 h-4.8 z" stroke="none" stroke-width="0" fill="#dfe3e8" />
<path d="M646 27.2 l2.6 2.6 M648.6 27.2 l-2.6 2.6" stroke="#3b4453" stroke-width="0.6" fill="none" />
<path d="M653.35 27.17 L655.65 27.17 L654.50 28.66 Z" fill="#d5d9df"/>
<path d="M644.2 35.0 h2.8 l1 1 v3.8 h-3.8 z" stroke="none" stroke-width="0" fill="#dfe3e8" />
<path d="M646.2 36.6 h2.8 l1 1 v3.8 h-3.8 z" stroke="#3b4453" stroke-width="0.4" fill="#c4cad3" />
<path d="M653.35 37.37 L655.65 37.37 L654.50 38.86 Z" fill="#d5d9df"/>
<text x="629.20" y="59.40" font-size="6.2" fill="#dfe3e9" textLength="20.50" lengthAdjust="spacingAndGlyphs" stroke="#dfe3e9" stroke-width="0.1" >Clipboard</text>
<line x1="658.30" y1="22.50" x2="658.30" y2="60.00" stroke="#2c3340" stroke-width="0.8" />
<path d="M664.8 25.8 h5.6 v4.4 h6.8 v5.8 h-12.4 z" stroke="none" stroke-width="0" fill="#d9dde3" />
<path d="M664.8 30.2 h5.6 v5.8 M670.4 30.2 h0" stroke="#aab2be" stroke-width="0.5" fill="none" />
<text x="666.40" y="44.00" font-size="6.2" fill="#dfe3e9" textLength="9.40" lengthAdjust="spacingAndGlyphs" stroke="#dfe3e9" stroke-width="0.1" >Base</text>
<path d="M669.95 46.51 L672.45 46.51 L671.20 48.14 Z" fill="#dfe3e8"/>
<text x="660.80" y="59.40" font-size="6.2" fill="#dfe3e9" textLength="9.60" lengthAdjust="spacingAndGlyphs" stroke="#dfe3e9" stroke-width="0.1" >View</text>
<path d="M672.95 56.55 L676.05 56.55 L674.50 58.56 Z" fill="#dfe3e8"/>
<text x="679.00" y="59.33" font-size="6" fill="#dfe3e9" stroke="#dfe3e9" stroke-width="0.1" >»</text>
<path d="M6.6 65.2 h6.6 M6.6 67.3 h6.6 M6.6 69.4 h6.6" stroke="#e3e6ea" stroke-width="0.8" fill="none" />
<line x1="18.20" y1="71.60" x2="21.00" y2="63.00" stroke="#4a5263" stroke-width="0.6" />
<text x="23.80" y="69.43" font-size="6" fill="#d5d9df" textLength="9.60" lengthAdjust="spacingAndGlyphs" stroke="#d5d9df" stroke-width="0.1" >Start</text>
<line x1="37.60" y1="71.60" x2="40.40" y2="63.00" stroke="#4a5263" stroke-width="0.6" />
<text x="43.00" y="69.43" font-size="6" fill="#c5cad3" textLength="28.40" lengthAdjust="spacingAndGlyphs" stroke="#c5cad3" stroke-width="0.1" >aynalı dolap*</text>
<path d="M79.3 73.1 L83 62.4 H125.6 L122 73.1 Z" stroke="none" stroke-width="0" fill="#373f4d" />
<text x="85.70" y="69.43" font-size="6" fill="#ffffff" font-weight="bold" textLength="28.00" lengthAdjust="spacingAndGlyphs" stroke="#ffffff" stroke-width="0.1" >ateş çukuru*</text>
<path d="M118.2 66.2 l2.6 2.6 M120.8 66.2 l-2.6 2.6" stroke="#d5d9df" stroke-width="0.6" fill="none" />
<path d="M129.3 67.5 h6 M132.3 64.5 v6" stroke="#f2f4f6" stroke-width="0.9" fill="none" />
<line x1="140.20" y1="71.60" x2="143.00" y2="63.00" stroke="#4a5263" stroke-width="0.6" />
<g id="drawing" fill="none" stroke-linecap="round" stroke-linejoin="round">
<circle cx="179.00" cy="255.80" r="60.20" stroke="#3a3a3a" stroke-width="0.55" fill="none" />
<circle cx="179.00" cy="255.80" r="92.20" stroke="#3a3a3a" stroke-width="0.55" fill="none" />
<path d="M182.2 137.64 A118.2 118.2 0 1 0 173.80 373.89" stroke="#3a3a3a" stroke-width="0.55" fill="none" />
<path d="M182.2 108.23 A147.6 147.6 0 1 0 173.20 403.29" stroke="#3a3a3a" stroke-width="0.55" fill="none" />
<line x1="182.20" y1="108.23" x2="182.20" y2="163.66" stroke="#3a3a3a" stroke-width="0.55" />
<line x1="174.40" y1="347.89" x2="173.20" y2="403.29" stroke="#3a3a3a" stroke-width="0.55" />
<rect x="0" y="-3.30" width="11.50" height="6.60" rx="1.2" fill="#fff" stroke="#3a3a3a" stroke-width="0.55" transform="translate(134.80 249.20) rotate(-13.07)"/>
<rect x="0" y="-3.30" width="14.28" height="6.60" rx="1.2" fill="#fff" stroke="#3a3a3a" stroke-width="0.55" transform="translate(207.00 260.60) rotate(37.03)"/>
<rect x="0" y="-3.50" width="52.44" height="7.00" rx="1.2" fill="#fff" stroke="#3a3a3a" stroke-width="0.55" transform="translate(160.00 285.60) rotate(-13.45)"/>
<rect x="0" y="-3.50" width="68.02" height="7.00" rx="1.2" fill="#fff" stroke="#3a3a3a" stroke-width="0.55" transform="translate(178.60 222.20) rotate(57.24)"/>
<rect x="0" y="-3.50" width="49.24" height="7.00" rx="1.2" fill="#fff" stroke="#3a3a3a" stroke-width="0.55" transform="translate(146.00 242.80) rotate(-14.83)"/>
<rect x="0" y="-3.50" width="49.71" height="7.00" rx="1.2" fill="#fff" stroke="#3a3a3a" stroke-width="0.55" transform="translate(141.20 237.00) rotate(60.34)"/>
<path d="M160 246 c2 -3 6 -3 8 -1 c3 -2 6 0 6 3 c2 2 1 5 -2 6 c0 3 -4 4 -6 2 c-3 1 -6 -1 -5 -4 c-2 -2 -2 -4 -1 -6 z" stroke="#2e2e2e" stroke-width="0.75" fill="#fff" />
<path d="M176 244 c3 -3 8 -2 9 2 c3 1 4 5 1 7 c1 3 -3 5 -5 3 c-3 2 -7 -1 -6 -4 c-2 -3 -1 -6 1 -8 z" stroke="#2e2e2e" stroke-width="0.75" fill="#fff" />
<path d="M166 258 c3 -2 7 -1 8 2 c3 1 3 5 0 6 c-1 3 -6 3 -7 0 c-3 0 -4 -3 -3 -5 c0 -1 1 -2 2 -3 z" stroke="#2e2e2e" stroke-width="0.75" fill="#fff" />
<path d="M183 256 c2 -3 7 -3 9 0 c3 0 5 4 3 7 c1 3 -2 6 -5 5 c-2 3 -7 2 -8 -1 c-3 -1 -3 -5 -1 -6 c-1 -2 0 -4 2 -5 z" stroke="#2e2e2e" stroke-width="0.75" fill="#fff" />
<path d="M172 266 c3 -1 6 0 7 3 c2 2 1 5 -2 6 c-2 2 -6 1 -7 -2 c-2 -2 0 -6 2 -7 z" stroke="#2e2e2e" stroke-width="0.75" fill="#fff" />
<path d="M154 240.6 c1 -1.6 3.4 -1.6 4 0 c0.6 1.6 -0.6 3 -2 3 c-1.4 0 -2.6 -1.4 -2 -3 z" stroke="#2e2e2e" stroke-width="0.75" fill="#fff" />
<path d="M153.6 256 c1 -1.4 3.4 -1 3.6 1 c0.4 2 -1.6 3 -3 2 c-1.2 -0.6 -1.4 -2 -0.6 -3 z" stroke="#2e2e2e" stroke-width="0.75" fill="#fff" />
<path d="M194 274 c1.4 -1.4 4 -0.6 4 1.4 c0 1.8 -2.4 2.6 -3.8 1.6 c-1 -0.6 -1 -2.2 -0.2 -3 z" stroke="#2e2e2e" stroke-width="0.75" fill="#fff" />
<path d="M161 238.6 l9.6 12 l3 -13.6 l-1.6 -0.4 l-2.4 9.6 l-7 -8.6 z" stroke="#2e2e2e" stroke-width="0.75" fill="#fff" />
<path d="M186 252 l6 -5 M188 255 l5 -3 M170 270 l2 8 M176 272 l1 7" stroke="#3a3a3a" stroke-width="0.55" fill="none" />
<path d="M163 249 c2 1 4 3 4 6 M170 247 c1 3 0 6 -2 8 M178 249 c2 2 5 2 7 0 M181 246 c-1 3 0 6 2 8 M168 262 c2 1 4 1 6 0 M186 260 c2 2 5 2 7 0 M189 257 c-2 3 -2 6 0 9 M175 269 c1 2 1 4 0 6 M158 250 c-1 2 -1 5 1 7 M196 262 c2 1 3 3 3 5" stroke="#3a3a3a" stroke-width="0.6" fill="none" />
<path d="M533.3 314 H541.4" stroke="#3a3a3a" stroke-width="0.55" fill="none" />
<path d="M298.60 150.40 L326.60 146.00 C342.60 143.80 354.20 155.40 354.00 171.40 C353.80 186.40 344.60 196.40 331.60 198.00 L308.20 202.60" stroke="#3a3a3a" stroke-width="0.55" fill="none" />
<path d="M298.60 152.60 L326.60 148.20 C341.28 146.00 352.00 156.28 351.80 171.40 C351.60 185.52 343.28 194.20 331.60 195.80 L308.20 200.40" stroke="#3a3a3a" stroke-width="0.55" fill="none" />
<path d="M298.60 155.00 L326.60 150.60 C339.84 148.40 349.60 157.24 349.40 171.40 C349.20 184.56 341.84 191.80 331.60 193.40 L308.20 198.00" stroke="#3a3a3a" stroke-width="0.55" fill="none" />
<path d="M298.60 150.40 L299.40 155.00 L303.60 154.20 M308.20 202.60 L307.40 198.00 L311.60 197.20" stroke="#3a3a3a" stroke-width="0.55" fill="none" />
<path d="M303.20 154.40 L311.80 197.40 M304.40 154.20 L312.80 197.20" stroke="#3a3a3a" stroke-width="0.55" fill="none" />
<path d="M324.30 151.00 C324.55 151.63 325.00 153.73 325.80 154.80 C326.60 155.87 327.80 157.10 329.10 157.40 C330.40 157.70 332.12 156.53 333.60 156.60 C335.08 156.67 336.73 157.07 338.00 157.80 C339.27 158.53 340.73 159.73 341.20 161.00 C341.67 162.27 340.70 164.00 340.80 165.40 C340.90 166.80 341.13 167.97 341.80 169.40 C342.47 170.83 344.40 172.50 344.80 174.00 C345.20 175.50 344.67 177.10 344.20 178.40 C343.73 179.70 342.67 180.60 342.00 181.80 C341.33 183.00 341.17 184.73 340.20 185.60 C339.23 186.47 337.37 186.47 336.20 187.00 C335.03 187.53 334.03 187.93 333.20 188.80 C332.37 189.67 331.53 191.63 331.20 192.20" stroke="#3a3a3a" stroke-width="0.55" fill="none" />
<path d="M298.20 333.20 L326.20 337.60 C342.20 339.80 353.80 328.20 353.60 312.20 C353.40 297.20 344.20 287.20 331.20 285.60 L307.80 281.00" stroke="#3a3a3a" stroke-width="0.55" fill="none" />
<path d="M298.20 331.00 L326.20 335.40 C340.88 337.60 351.60 327.32 351.40 312.20 C351.20 298.08 342.88 289.40 331.20 287.80 L307.80 283.20" stroke="#3a3a3a" stroke-width="0.55" fill="none" />
<path d="M298.20 328.60 L326.20 333.00 C339.44 335.20 349.20 326.36 349.00 312.20 C348.80 299.04 341.44 291.80 331.20 290.20 L307.80 285.60" stroke="#3a3a3a" stroke-width="0.55" fill="none" />
<path d="M298.20 333.20 L299.00 328.60 L303.20 329.40 M307.80 281.00 L307.00 285.60 L311.20 286.40" stroke="#3a3a3a" stroke-width="0.55" fill="none" />
<path d="M302.80 329.20 L311.40 286.20 M304.00 329.40 L312.40 286.40" stroke="#3a3a3a" stroke-width="0.55" fill="none" />
<path d="M323.90 332.60 C324.15 331.97 324.60 329.87 325.40 328.80 C326.20 327.73 327.40 326.50 328.70 326.20 C330.00 325.90 331.72 327.07 333.20 327.00 C334.68 326.93 336.33 326.53 337.60 325.80 C338.87 325.07 340.33 323.87 340.80 322.60 C341.27 321.33 340.30 319.60 340.40 318.20 C340.50 316.80 340.73 315.63 341.40 314.20 C342.07 312.77 344.00 311.10 344.40 309.60 C344.80 308.10 344.27 306.50 343.80 305.20 C343.33 303.90 342.27 303.00 341.60 301.80 C340.93 300.60 340.77 298.87 339.80 298.00 C338.83 297.13 336.97 297.13 335.80 296.60 C334.63 296.07 333.63 295.67 332.80 294.80 C331.97 293.93 331.13 291.97 330.80 291.40" stroke="#3a3a3a" stroke-width="0.55" fill="none" />
<circle cx="313.00" cy="242.70" r="28.80" stroke="#3a3a3a" stroke-width="0.55" fill="none" />
<circle cx="313.00" cy="242.70" r="27.40" stroke="#3a3a3a" stroke-width="0.55" fill="none" />
<rect x="396.0" y="123.3" width="295.20000000000005" height="61.10000000000001" stroke="#3a3a3a" stroke-width="0.55"/>
<line x1="425.00" y1="123.30" x2="425.00" y2="184.40" stroke="#3a3a3a" stroke-width="0.55" />
<line x1="661.70" y1="123.30" x2="661.70" y2="184.40" stroke="#3a3a3a" stroke-width="0.55" />
<path d="M425 148.7 H460.4 M450.7 148.7 V184.4 M424.2 166.5 H450.7 M450.7 169.7 H462" stroke="#3a3a3a" stroke-width="0.55" fill="none" />
<path d="M483 184.4 V197.7 H604.3 V184.4" stroke="#3a3a3a" stroke-width="0.55" fill="none" />
<path d="M518.6 168.7 H524 M545.4 168.7 H547.6 M560.8 168.7 H597" stroke="#3a3a3a" stroke-width="0.55" fill="none" />
<path d="M461.80 183.80 C461.53 178.17 460.57 157.13 460.20 150.00 C459.83 142.87 459.07 143.67 459.60 141.00 C460.13 138.33 461.10 135.80 463.40 134.00 C465.70 132.20 470.07 131.03 473.40 130.20 C476.73 129.37 478.40 128.73 483.40 129.00 C488.40 129.27 498.40 130.03 503.40 131.80 C508.40 133.57 510.93 136.40 513.40 139.60 C515.87 142.80 517.20 146.60 518.20 151.00 C519.20 155.40 519.20 160.53 519.40 166.00 C519.60 171.47 519.40 180.83 519.40 183.80 Z" stroke="#3a3a3a" stroke-width="0.7" fill="#fff" />
<path d="M462.80 183.00 C462.77 177.00 462.23 154.33 462.60 147.00 C462.97 139.67 463.20 141.20 465.00 139.00 C466.80 136.80 470.33 134.87 473.40 133.80 C476.47 132.73 478.73 132.43 483.40 132.60 C488.07 132.77 496.90 133.30 501.40 134.80 C505.90 136.30 508.17 138.63 510.40 141.60 C512.63 144.57 513.87 148.53 514.80 152.60 C515.73 156.67 515.77 160.93 516.00 166.00 C516.23 171.07 516.17 180.17 516.20 183.00" stroke="#3a3a3a" stroke-width="0.55" fill="none" />
<line x1="463.80" y1="143.50" x2="463.80" y2="182.80" stroke="#444" stroke-width="0.72" />
<line x1="466.37" y1="138.65" x2="466.37" y2="182.80" stroke="#444" stroke-width="0.72" />
<line x1="468.94" y1="137.06" x2="468.94" y2="182.80" stroke="#444" stroke-width="0.72" />
<line x1="471.51" y1="135.47" x2="471.51" y2="182.80" stroke="#444" stroke-width="0.72" />
<line x1="474.08" y1="134.22" x2="474.08" y2="182.80" stroke="#444" stroke-width="0.72" />
<line x1="476.65" y1="133.91" x2="476.65" y2="182.80" stroke="#444" stroke-width="0.72" />
<line x1="479.22" y1="133.60" x2="479.22" y2="182.80" stroke="#444" stroke-width="0.72" />
<line x1="481.79" y1="133.29" x2="481.79" y2="182.80" stroke="#444" stroke-width="0.72" />
<line x1="484.36" y1="133.22" x2="484.36" y2="182.80" stroke="#444" stroke-width="0.72" />
<line x1="486.93" y1="133.53" x2="486.93" y2="182.80" stroke="#444" stroke-width="0.72" />
<line x1="489.50" y1="133.85" x2="489.50" y2="182.80" stroke="#444" stroke-width="0.72" />
<line x1="492.07" y1="134.16" x2="492.07" y2="182.80" stroke="#444" stroke-width="0.72" />
<line x1="494.64" y1="134.47" x2="494.64" y2="182.80" stroke="#444" stroke-width="0.72" />
<line x1="497.21" y1="134.79" x2="497.21" y2="182.80" stroke="#444" stroke-width="0.72" />
<line x1="499.78" y1="135.10" x2="499.78" y2="182.80" stroke="#444" stroke-width="0.72" />
<line x1="502.35" y1="136.02" x2="502.35" y2="182.80" stroke="#444" stroke-width="0.72" />
<line x1="504.92" y1="137.96" x2="504.92" y2="182.80" stroke="#444" stroke-width="0.72" />
<line x1="507.49" y1="139.90" x2="507.49" y2="182.80" stroke="#444" stroke-width="0.72" />
<line x1="510.06" y1="141.84" x2="510.06" y2="182.80" stroke="#444" stroke-width="0.72" />
<line x1="512.63" y1="147.67" x2="512.63" y2="182.80" stroke="#444" stroke-width="0.72" />
<line x1="515.20" y1="157.57" x2="515.20" y2="182.80" stroke="#444" stroke-width="0.72" />
<line x1="463.40" y1="145.13" x2="463.40" y2="182.80" stroke="#444" stroke-width="0.5" />
<line x1="464.90" y1="140.13" x2="464.90" y2="182.80" stroke="#444" stroke-width="0.5" />
<line x1="466.40" y1="138.93" x2="466.40" y2="182.80" stroke="#444" stroke-width="0.5" />
<line x1="512.60" y1="147.90" x2="512.60" y2="182.80" stroke="#444" stroke-width="0.5" />
<line x1="514.10" y1="151.65" x2="514.10" y2="182.80" stroke="#444" stroke-width="0.5" />
<line x1="515.60" y1="162.33" x2="515.60" y2="182.80" stroke="#444" stroke-width="0.5" />
<path d="M463.80 159.8 H515.20 M463.80 162.2 H515.20 M463.80 167.4 H515.20" stroke="#3a3a3a" stroke-width="0.5" fill="none" />
<path d="M461.80 183.0 H519.40" stroke="#3a3a3a" stroke-width="0.9" fill="none" />
<path d="M597.00 183.60 C596.87 180.50 596.37 169.77 596.20 165.00 C596.03 160.23 595.43 158.07 596.00 155.00 C596.57 151.93 597.43 149.65 599.60 146.60 C601.77 143.55 604.23 139.27 609.00 136.70 C613.77 134.13 621.53 132.25 628.20 131.20 C634.87 130.15 644.47 130.03 649.00 130.40 C653.53 130.77 654.03 131.97 655.40 133.40 C656.77 134.83 657.10 136.90 657.20 139.00 C657.30 141.10 656.23 141.67 656.00 146.00 C655.77 150.33 655.80 158.73 655.80 165.00 C655.80 171.27 655.97 180.50 656.00 183.60 Z" stroke="#3a3a3a" stroke-width="0.7" fill="#fff" />
<path d="M598.80 183.00 C598.77 178.67 598.10 162.67 598.60 157.00 C599.10 151.33 599.80 151.87 601.80 149.00 C603.80 146.13 606.17 142.25 610.60 139.80 C615.03 137.35 622.23 135.35 628.40 134.30 C634.57 133.25 643.57 133.12 647.60 133.50 C651.63 133.88 651.60 135.18 652.60 136.60 C653.60 138.02 653.47 137.27 653.60 142.00 C653.73 146.73 653.40 158.17 653.40 165.00 C653.40 171.83 653.57 180.00 653.60 183.00" stroke="#3a3a3a" stroke-width="0.55" fill="none" />
<line x1="599.80" y1="154.50" x2="599.80" y2="182.80" stroke="#444" stroke-width="0.72" />
<line x1="602.58" y1="148.69" x2="602.58" y2="182.80" stroke="#444" stroke-width="0.72" />
<line x1="605.36" y1="145.78" x2="605.36" y2="182.80" stroke="#444" stroke-width="0.72" />
<line x1="608.14" y1="142.88" x2="608.14" y2="182.80" stroke="#444" stroke-width="0.72" />
<line x1="610.92" y1="140.20" x2="610.92" y2="182.80" stroke="#444" stroke-width="0.72" />
<line x1="613.69" y1="139.34" x2="613.69" y2="182.80" stroke="#444" stroke-width="0.72" />
<line x1="616.47" y1="138.49" x2="616.47" y2="182.80" stroke="#444" stroke-width="0.72" />
<line x1="619.25" y1="137.63" x2="619.25" y2="182.80" stroke="#444" stroke-width="0.72" />
<line x1="622.03" y1="136.77" x2="622.03" y2="182.80" stroke="#444" stroke-width="0.72" />
<line x1="624.81" y1="135.91" x2="624.81" y2="182.80" stroke="#444" stroke-width="0.72" />
<line x1="627.59" y1="135.05" x2="627.59" y2="182.80" stroke="#444" stroke-width="0.72" />
<line x1="630.37" y1="134.72" x2="630.37" y2="182.80" stroke="#444" stroke-width="0.72" />
<line x1="633.15" y1="134.60" x2="633.15" y2="182.80" stroke="#444" stroke-width="0.72" />
<line x1="635.93" y1="134.49" x2="635.93" y2="182.80" stroke="#444" stroke-width="0.72" />
<line x1="638.71" y1="134.37" x2="638.71" y2="182.80" stroke="#444" stroke-width="0.72" />
<line x1="641.48" y1="134.25" x2="641.48" y2="182.80" stroke="#444" stroke-width="0.72" />
<line x1="644.26" y1="134.14" x2="644.26" y2="182.80" stroke="#444" stroke-width="0.72" />
<line x1="647.04" y1="134.02" x2="647.04" y2="182.80" stroke="#444" stroke-width="0.72" />
<line x1="649.82" y1="135.38" x2="649.82" y2="182.80" stroke="#444" stroke-width="0.72" />
<line x1="652.60" y1="137.10" x2="652.60" y2="182.80" stroke="#444" stroke-width="0.72" />
<line x1="600.20" y1="153.80" x2="600.20" y2="182.80" stroke="#444" stroke-width="0.5" />
<line x1="602.00" y1="149.59" x2="602.00" y2="182.80" stroke="#444" stroke-width="0.5" />
<line x1="603.80" y1="147.71" x2="603.80" y2="182.80" stroke="#444" stroke-width="0.5" />
<line x1="605.60" y1="145.83" x2="605.60" y2="182.80" stroke="#444" stroke-width="0.5" />
<line x1="607.40" y1="143.95" x2="607.40" y2="182.80" stroke="#444" stroke-width="0.5" />
<line x1="609.20" y1="142.06" x2="609.20" y2="182.80" stroke="#444" stroke-width="0.5" />
<line x1="611.00" y1="140.48" x2="611.00" y2="182.80" stroke="#444" stroke-width="0.5" />
<path d="M599.80 159.8 H652.60 M599.80 162.2 H652.60 M599.80 167.4 H652.60" stroke="#3a3a3a" stroke-width="0.5" fill="none" />
<path d="M597.00 183.0 H656.00" stroke="#3a3a3a" stroke-width="0.9" fill="none" />
<path d="M522.6 168.6 C520.4 160 521.6 152 524.6 146 C526.4 140 528 132 529.2 123.6 C531.2 129 532.4 134 533.2 140 C534.8 130 536.6 116 538.2 104.2 C539.8 116 541.4 130 542 142 C543.4 134 544.8 128 546.2 123.4 C547.2 128 547.8 133 548.2 138 C549.2 132 550 127 550.9 123.4 C553.4 132 555.6 142 554.4 150 C553 158 549.6 164 546.4 168.6" stroke="#3a3a3a" stroke-width="0.55" fill="#fff" />
<path d="M527.6 166 C525.4 158 527.4 150 530.6 143 C531.8 150 533.4 158 536.8 164.6 C538.2 156 540.2 148 542 142 M536.8 164.6 C540.4 160 543.6 153 544.6 146 C546.8 152 546 160 543 167 M524.6 146 C526.4 152 528.6 160 530 168 M548.2 138 C549.6 144 549.4 152 547.4 158 M533.2 140 C533.6 146 534.6 152 536 157" stroke="#3a3a3a" stroke-width="0.55" fill="none" />
<path d="M518.8 148.6 H529.4 M586.2 148.6 H597" stroke="#3a3a3a" stroke-width="0.55" fill="none" />
<rect x="529.40" y="148.50" width="56.80" height="1.90" fill="#fff" stroke="#3a3a3a" stroke-width="0.55"/>
<path d="M546.5 150.4 V152 H565.6 V150.4" stroke="#3a3a3a" stroke-width="0.55" fill="none" />
<path d="M556 152 C555.6 160 551 170 545.8 174.4 C542.6 177.6 539 180 535.5 181.7 L535.5 184.3 L540.3 184.3 C544 181.6 547.4 178.6 549.9 175.6 C554.6 170 558.4 160 558.8 152 Z" stroke="#3a3a3a" stroke-width="0.55" fill="#fff" />
<path d="M559.6 152 C559.6 160 561.4 172 566.4 184.2 M561 152 C561.2 160 563.2 172 568.6 184.2 M562.4 152 C562.8 160 565.2 172 571.8 181.8 L572.6 184.3 L566.4 184.3" stroke="#3a3a3a" stroke-width="0.55" fill="none" />
<circle cx="562.30" cy="160.60" r="0.80" stroke="#3a3a3a" stroke-width="0.5" fill="none" />
<path d="M565.6 168.6 H570.4" stroke="#3a3a3a" stroke-width="0.55" fill="none" />
<text x="393.00" y="206.89" font-size="10.4" fill="#1a1a1a" textLength="54.60" lengthAdjust="spacingAndGlyphs" style="font-family:'DejaVu Sans', Verdana, sans-serif" stroke="#1a1a1a" stroke-width="0.15">Front view</text>
<path d="M388.3 375.7 V314 H531.7 V375.7 M533.3 314 V375.7" stroke="#3a3a3a" stroke-width="0.55" fill="none" />
<line x1="388.30" y1="375.70" x2="716.00" y2="375.70" stroke="#3a3a3a" stroke-width="0.55" />
<path d="M475.7 375.7 V389 H597.7 V375.7" stroke="#3a3a3a" stroke-width="0.55" fill="none" />
<path d="M533.3 357.7 H554 V375.7 M556 375.7 V360.3 H629.3 V375.7" stroke="#3a3a3a" stroke-width="0.55" fill="none" />
<path d="M570 360.3 c1 -1.2 4 -1.2 5 0" stroke="#3a3a3a" stroke-width="0.55" fill="none" />
<path d="M525 314 C526.6 308 527.6 302 528.3 295 C529 302 530 308 531.4 314" stroke="#3a3a3a" stroke-width="0.55" fill="none" />
<path d="M533.6 352 C533.2 342 533.6 334 535 328 C536.4 332 537 336 537.8 340 C539.4 330 541.6 320 543.3 313.3 C544.4 320 545 326 545.4 332 C546.2 325 547.2 319 548.3 313.3 C550 322 552.6 330 555.6 338 C558 345 560 352 560 360" stroke="#3a3a3a" stroke-width="0.55" fill="none" />
<path d="M535 328 C537 338 538.6 346 540.6 356 C542 348 544 340 545.4 332 M540.6 356 C543 350 546 346 548 340 C550 346 552 352 553.4 357.4 M548.3 313.3 C548.6 324 550 336 553 346 C555 352 556 356 556.4 360" stroke="#3a3a3a" stroke-width="0.55" fill="none" />
<text x="399.40" y="397.89" font-size="10.4" fill="#1a1a1a" textLength="49.80" lengthAdjust="spacingAndGlyphs" style="font-family:'DejaVu Sans', Verdana, sans-serif" stroke="#1a1a1a" stroke-width="0.15">Side view</text>
<line x1="664.00" y1="346.38" x2="664.00" y2="374.40" stroke="#262626" stroke-width="1.15" />
<line x1="666.42" y1="344.47" x2="666.51" y2="374.40" stroke="#262626" stroke-width="1.15" />
<line x1="668.84" y1="342.64" x2="669.02" y2="374.40" stroke="#262626" stroke-width="1.15" />
<line x1="671.27" y1="340.88" x2="671.53" y2="374.40" stroke="#262626" stroke-width="1.15" />
<line x1="673.69" y1="339.20" x2="674.04" y2="374.40" stroke="#262626" stroke-width="1.15" />
<line x1="676.11" y1="337.59" x2="676.56" y2="374.40" stroke="#262626" stroke-width="1.15" />
<line x1="678.53" y1="336.05" x2="679.07" y2="374.40" stroke="#262626" stroke-width="1.15" />
<line x1="680.96" y1="334.59" x2="681.58" y2="374.40" stroke="#262626" stroke-width="1.15" />
<line x1="683.38" y1="333.21" x2="684.09" y2="374.40" stroke="#262626" stroke-width="1.15" />
<line x1="685.80" y1="331.92" x2="686.60" y2="374.40" stroke="#262626" stroke-width="1.15" />
<line x1="688.22" y1="330.70" x2="689.11" y2="374.40" stroke="#262626" stroke-width="1.15" />
<line x1="690.64" y1="329.56" x2="691.62" y2="374.40" stroke="#262626" stroke-width="1.15" />
<line x1="693.07" y1="328.51" x2="694.13" y2="374.40" stroke="#262626" stroke-width="1.15" />
<line x1="695.49" y1="327.55" x2="696.64" y2="374.40" stroke="#262626" stroke-width="1.15" />
<line x1="697.91" y1="326.69" x2="699.16" y2="374.40" stroke="#262626" stroke-width="1.15" />
<line x1="700.33" y1="325.91" x2="701.67" y2="374.40" stroke="#262626" stroke-width="1.15" />
<line x1="702.76" y1="325.23" x2="704.18" y2="374.40" stroke="#262626" stroke-width="1.15" />
<line x1="705.18" y1="324.66" x2="706.69" y2="374.40" stroke="#262626" stroke-width="1.15" />
<line x1="707.60" y1="324.19" x2="709.20" y2="374.40" stroke="#262626" stroke-width="1.15" />
<line x1="662.60" y1="347.71" x2="662.60" y2="374.40" stroke="#333" stroke-width="0.5" />
<line x1="663.90" y1="346.66" x2="663.90" y2="374.40" stroke="#333" stroke-width="0.5" />
<line x1="665.20" y1="345.63" x2="665.20" y2="374.40" stroke="#333" stroke-width="0.5" />
<line x1="666.50" y1="344.61" x2="666.50" y2="374.40" stroke="#333" stroke-width="0.5" />
<line x1="667.80" y1="343.62" x2="667.80" y2="374.40" stroke="#333" stroke-width="0.5" />
<line x1="669.10" y1="342.65" x2="669.10" y2="374.40" stroke="#333" stroke-width="0.5" />
<path d="M660.4 348.4 C662 342 668 339.4 674 336.8 L705 323.2 C709 321.6 712 321.0 714.8 321.2 L714.6 323.8 C711 323.8 708 324.6 705.8 325.6 L675.2 339.2 C669.2 341.8 664.8 344.2 663 349.2 Z" stroke="#222" stroke-width="0.9" fill="#fff" />
<path d="M714.6 323.4 C711.6 334 709.2 346 709.0 356 C709.0 364 709.8 370 710.8 374.8" stroke="#222" stroke-width="1.1" fill="none" />
<path d="M712.2 324.2 C709.4 334 707.2 346 707.0 356 C707.0 364 707.6 370 708.6 374.8" stroke="#222" stroke-width="0.7" fill="none" />
<path d="M653.6 339.2 C664 332.6 686 323.4 701.4 320.2 C702.8 321.2 702.2 322.6 700.8 323.2 C686 328.4 668 335.2 656.6 340.4 Z" stroke="#222" stroke-width="0.8" fill="#fff" />
<path d="M642.6 339.6 H668.4 V341.6 H642.6 Z" stroke="#222" stroke-width="0.8" fill="#fff" />
<path d="M646.2 341.6 C645.4 352 643.8 364 642.4 374.8 L645.2 374.8 C646.6 364 647.8 352 648.8 341.6" stroke="#222" stroke-width="0.8" fill="#fff" />
<path d="M650.6 341.6 C650 352 649.6 364 649.4 374.8 M652.8 341.6 C652.8 352 652.6 364 652.2 374.8" stroke="#3a3a3a" stroke-width="0.55" fill="none" />
<path d="M655 341.6 V349 M657.4 341.6 V349" stroke="#3a3a3a" stroke-width="0.55" fill="none" />
<rect x="650.80" y="349.60" width="9.60" height="6.60" fill="#fff" stroke="#222" stroke-width="0.7"/>
<path d="M660.8 347.6 C660 356 659.4 366 659.6 374.8 M663 349.2 C662.2 357 661.8 366 662 374.8" stroke="#222" stroke-width="0.8" fill="none" />
<path d="M662.4 352.8 H709.4 M662.4 358.6 H709" stroke="#222" stroke-width="0.7" fill="none" />
<path d="M664 355.7 H708.4" stroke="#fff" stroke-width="1.9" fill="none" />
<path d="M664 355.7 H708.4" stroke="#999" stroke-width="0.3" fill="none" />
<path d="M646 362 L659.6 368 M646 365 L659.6 371" stroke="#3a3a3a" stroke-width="0.55" fill="none" />
<line x1="642.40" y1="374.90" x2="711.40" y2="374.90" stroke="#222" stroke-width="1.0" />
</g>
<g id="mascot">
<defs>
<linearGradient id="hair" x1="0" y1="0" x2="0" y2="1"><stop offset="0" stop-color="#fbd245"/><stop offset="0.6" stop-color="#f6b31c"/><stop offset="1" stop-color="#e6900f"/></linearGradient>
<linearGradient id="ptxt" x1="0" y1="0" x2="0" y2="1"><stop offset="0" stop-color="#44a6e4"/><stop offset="1" stop-color="#155fb4"/></linearGradient>
</defs>
<path d="M720 131 C716 133.6 712.6 136.6 711 140.4 L709.6 143.2 L714.4 145 C715.6 141.6 718.4 139.4 722.6 138.2 L727 137.6 L730.4 138.4 C733 139.8 734.6 142 735.4 144.6 L740 143.4 C739 139 737.6 135 735.6 131.4 Z" stroke="#2a3a55" stroke-width="0.3" fill="#2b88d6" />
<path d="M709.8 142.4 L714.8 144.4 C715.6 146 715.4 147.6 714.4 148.6 C711.6 149.2 708 148.8 705.8 147.4 C706.6 145.4 708 143.6 709.8 142.4 Z" stroke="#2a3a55" stroke-width="0.3" fill="#1b62b0" />
<path d="M735.2 144.2 L740 143 C741.4 145.6 741.8 148.4 741 150.6 C739 151 737 150.4 736.2 149.4 C735.4 147.8 735 146 735.2 144.2 Z" stroke="#2a3a55" stroke-width="0.3" fill="#1b62b0" />
<path d="M709.8 142.4 L714.8 144.4 M735.2 144.2 L740 143" stroke="#3a3f48" stroke-width="0.9" fill="none" />
<path d="M718.6 113.4 C722.6 115 729 114.8 733 112.6 C735 118 736.6 124 736.6 129 C736.6 132 736 134.6 735 136.4 C730 138 724 138 719.4 136.4 C717.8 131 717.6 122 718.6 113.4 Z" stroke="#2a3a55" stroke-width="0.3" fill="#2b88d6" />
<path d="M725.8 114.6 C726.2 122 726.8 130 727.4 137.4" stroke="#1b62b0" stroke-width="0.7" fill="none" />
<path d="M722.4 128 h2.6 M729 127.6 h2.6" stroke="#1b62b0" stroke-width="0.6" fill="none" />
<path d="M731.6 112.8 C736 112.6 741 114.6 743.8 118.2 C745.2 116 745 112.6 743.6 110 L740 110.8 C740.2 112.4 740 113.6 739.4 114.4 C737.4 113 734.6 112.2 731.6 112.8 Z" stroke="#2a3a55" stroke-width="0.3" fill="#2b88d6" />
<path d="M720.4 113.4 C715.6 114.8 710.8 118.6 707.2 122.4 L709.8 126.6 C713.2 123.6 717.6 121.2 721.2 120.4 Z" stroke="#2a3a55" stroke-width="0.3" fill="#2b88d6" />
<line x1="693.40" y1="128.60" x2="753.80" y2="106.20" stroke="#5a3414" stroke-width="2.3" stroke-linecap="round"/>
<line x1="693.40" y1="128.60" x2="753.80" y2="106.20" stroke="#a7662f" stroke-width="1.5" stroke-linecap="round"/>
<circle cx="708.40" cy="124.40" r="2.10" stroke="#2a3a55" stroke-width="0.3" fill="#f3bd8e" />
<circle cx="741.40" cy="110.60" r="2.20" stroke="#2a3a55" stroke-width="0.3" fill="#f3bd8e" />
<path d="M753.4 106.6 C752.6 102.4 753 98.6 754 95.8 C756.6 98.2 760 99 762.6 100.6 C765.8 102.6 765.8 106.2 763.6 108.2 C763.8 110.8 763.4 113.2 762 115.4 C760.6 113.2 760 111.2 760 109.2 C757.4 109.6 754.8 108.6 753.4 106.6 Z" stroke="#d48a10" stroke-width="0.4" fill="url(#hair)" />
<path d="M712.8 97.2 C712.4 104 715 109.8 720 112 C723.4 113.4 727.4 113.4 730.8 111.8 C736 109.2 739.6 104 739.8 97 C731 100.2 721 100.2 712.8 97.2 Z" stroke="#8a5a3a" stroke-width="0.3" fill="#f3bd8e" />
<ellipse cx="739.8" cy="103.6" rx="1.6" ry="2.3" fill="#eeb080" stroke="#8a5a3a" stroke-width="0.3"/>
<path d="M738 97.6 L742 96.4 L741.4 103 L739.2 100.8 Z" stroke="none" stroke-width="0" fill="#e8951c" />
<ellipse cx="719.8" cy="101.4" rx="2.7" ry="1.9" fill="#fff" stroke="#3a2a1a" stroke-width="0.3"/>
<ellipse cx="730.2" cy="101.4" rx="2.7" ry="1.9" fill="#fff" stroke="#3a2a1a" stroke-width="0.3"/>
<circle cx="720.60" cy="101.60" r="1.25" stroke="none" stroke-width="0" fill="#3a8fc8" />
<circle cx="720.60" cy="101.60" r="0.60" stroke="none" stroke-width="0" fill="#14202c" />
<circle cx="729.60" cy="101.60" r="1.25" stroke="none" stroke-width="0" fill="#3a8fc8" />
<circle cx="729.60" cy="101.60" r="0.60" stroke="none" stroke-width="0" fill="#14202c" />
<path d="M716.2 99 L722.8 100.2 M727.4 100.2 L733.6 98.8" stroke="#3a2414" stroke-width="0.9" fill="none" />
<path d="M724.6 104 C724.2 105 724.8 105.8 725.8 105.6" stroke="#b07848" stroke-width="0.5" fill="none" />
<path d="M721.4 107.4 C724 109.4 727.8 109.2 729.8 106.6" stroke="#7a4020" stroke-width="0.6" fill="none" />
<path d="M712.8 92 C712.4 88 713.2 84.6 714.6 82.4 L716.6 85 C717 81.6 718.6 79.2 720.8 77.6 L722 80.6 C723.6 77.6 726.6 75.8 729.8 75.6 L729.4 78.4 C732 77 735 77.6 737.2 79 L735.6 81.2 C738.6 81.8 740.6 84 741.4 86.4 L739.8 87 C741.4 88.4 742 90 742 92 Z" stroke="#c47c0c" stroke-width="0.5" fill="url(#hair)" />
<path d="M720 90 C720 86 721 83 723 81 M726 90 C726.4 85 727.6 81.6 729.6 79.6 M732.6 90 C733.4 86 734.6 83.6 736.4 82" stroke="#e6900f" stroke-width="0.5" fill="none" />
<path d="M711.2 91 C720 94.2 734 94.2 743 90.8 L743.4 97.4 C734 100.6 720 100.6 711.4 97.8 Z" stroke="none" stroke-width="0" fill="#34343a" />
<path d="M742.8 91.6 C746 89.8 749.8 89.8 751.8 91.2 C749.8 92 749 93.8 749.4 96.8 C747.8 94.8 746.4 94.2 743.2 95 Z" stroke="none" stroke-width="0" fill="#2c2c32" />
<path d="M745.8 94 C747.8 96 748.6 98.8 747.8 101.4 C746.6 98.8 745.4 97.4 743.2 96.8 Z" stroke="none" stroke-width="0" fill="#2c2c32" />
</g>
<text transform="translate(674.4 0) scale(1.2 1)" style="font-family:'DejaVu Sans', 'Liberation Sans', sans-serif;font-style:italic" fill="url(#ptxt)" stroke="#2277c6" stroke-width="0.6" x="0.00 11.83 14.67 19.33 23.83 27.33 36.67 56.17 58.67 67.83 77.50" y="162.6 167.0 167.6 168.8 169.2 169.8 170.4 169.6 168.8 166.8 163.6" rotate="-5 4 6 4 6 4 3 -4 -8 -14 -24"><tspan font-size="20.5">P</tspan><tspan font-size="10.6" style="font-family:'DejaVu Sans Condensed', 'DejaVu Sans', sans-serif">is</tspan><tspan font-size="14" style="font-family:'DejaVu Sans Condensed', 'DejaVu Sans', sans-serif">l</tspan><tspan font-size="10.6" style="font-family:'DejaVu Sans Condensed', 'DejaVu Sans', sans-serif">i</tspan><tspan font-size="14" style="font-family:'DejaVu Sans Condensed', 'DejaVu Sans', sans-serif">k</tspan><tspan font-size="20.5">M</tspan><tspan font-size="10" style="font-family:'DejaVu Sans Condensed', 'DejaVu Sans', sans-serif">i</tspan><tspan font-size="10.6" style="font-family:'DejaVu Sans Condensed', 'DejaVu Sans', sans-serif">m</tspan><tspan font-size="12.6" style="font-family:'DejaVu Sans Condensed', 'DejaVu Sans', sans-serif">a</tspan><tspan font-size="19">r</tspan></text>
<defs>
<linearGradient id="dwgb" x1="0" y1="0" x2="1" y2="1"><stop offset="0" stop-color="#1b3f78"/><stop offset="1" stop-color="#2f68ad"/></linearGradient>
<linearGradient id="dwgy" x1="0" y1="0" x2="1" y2="0.6"><stop offset="0" stop-color="#e9b200"/><stop offset="0.55" stop-color="#ffe14a"/><stop offset="1" stop-color="#f3c600"/></linearGradient>
<linearGradient id="dlr" x1="0" y1="0" x2="0" y2="1"><stop offset="0" stop-color="#e6232b"/><stop offset="0.55" stop-color="#cf1219"/><stop offset="1" stop-color="#a30b11"/></linearGradient>
<radialGradient id="dlc" cx="0.5" cy="0.35" r="0.7"><stop offset="0" stop-color="#c0141a"/><stop offset="1" stop-color="#7e070c"/></radialGradient>
<clipPath id="dwgclip"><path d="M34.6 310.6 H60.6 L71.4 321.4 V359 H34.6 Z"/></clipPath>
</defs>
<g id="dwg">
<path d="M35.4 311.6 H61.2 L72.2 322.4 V360 H35.4 Z" stroke="none" stroke-width="0" fill="#000" opacity="0.18"/>
<g clip-path="url(#dwgclip)">
<rect x="34.60" y="310.60" width="37.00" height="49.00" fill="url(#dwgy)" />
<path d="M34.6 310.6 H71.4 V346.6 C58 338 46 336 34.6 338.4 Z" stroke="none" stroke-width="0" fill="url(#dwgb)" />
<path d="M45.2 310.6 V337 M34.6 326.2 H71.4" stroke="#9cc4ee" stroke-width="0.8" fill="none" />
<rect x="41.60" y="322.60" width="7.20" height="7.20" fill="#2a5c9a" stroke="#bcd8f4" stroke-width="0.8"/>
<rect x="44.20" y="325.20" width="2.00" height="2.00" fill="#dcebfa" />
<path d="M34.6 338.4 C46 336 58 338 71.4 346.6" stroke="#dfe9f5" stroke-width="0.7" fill="none" />
</g>
<path d="M60.6 310.6 L71.4 321.4 H63 C61.6 321.4 60.6 320.4 60.6 319 Z" stroke="none" stroke-width="0" fill="#6f9bd0" />
<path d="M60.6 310.6 L71.4 321.4 L71.4 324.6 L62.6 321.4 Z" stroke="none" stroke-width="0" fill="#163565" opacity="0.55"/>
<text x="57.00" y="356.81" font-size="9.6" fill="#0f0f10" font-weight="bold" text-anchor="middle" textLength="26.40" lengthAdjust="spacingAndGlyphs" stroke="#0f0f10" stroke-width="0.1" >.dwg</text>
</g>
<g id="download">
<rect x="5.20" y="368.60" width="94.60" height="33.40" fill="#000" rx="16.7" opacity="0.16"/>
<rect x="4.40" y="367.20" width="94.60" height="33.20" fill="url(#dlr)" rx="16.6"/>
<path d="M14 370.4 C30 368.2 74 368.2 90 370.4" stroke="#f0585e" stroke-width="0.7" fill="none" opacity="0.8"/>
<circle cx="82.70" cy="384.60" r="10.20" stroke="#b00d13" stroke-width="0.5" fill="url(#dlc)" />
<path d="M80.1 378.6 h5.2 v6.4 h3.6 l-6.2 6.4 l-6.2 -6.4 h3.6 z" stroke="none" stroke-width="0" fill="#ffffff" />
<text x="12.40" y="389.60" font-size="12.4" fill="#ffffff" font-weight="bold" textLength="55.80" lengthAdjust="spacingAndGlyphs" stroke="#ffffff" stroke-width="0.1" >DOWNLOAD</text>
</g>
<rect x="-4.00" y="408.90" width="788.00" height="36.00" fill="#222933" />
<path d="M6.3 413.8 h6.6 M6.3 415.8 h6.6 M6.3 417.8 h6.6" stroke="#d5d9df" stroke-width="0.8" fill="none" />
<line x1="16.60" y1="420.40" x2="19.20" y2="410.60" stroke="#4a5263" stroke-width="0.6" />
<text x="24.00" y="418.09" font-size="5.6" fill="#d5d9df" textLength="12.60" lengthAdjust="spacingAndGlyphs" stroke="#d5d9df" stroke-width="0.1" >Model</text>
<path d="M40.4 421.9 L43.6 411.2 H88.8 L85.6 421.9 Z" stroke="none" stroke-width="0" fill="#3b4453" />
<text x="47.00" y="418.19" font-size="5.6" fill="#ffffff" font-weight="bold" textLength="37.40" lengthAdjust="spacingAndGlyphs" stroke="#ffffff" stroke-width="0.1" >PislikMimar.com</text>
<path d="M93.8 416 h5.4 M96.5 413.3 v5.4" stroke="#e3e6ea" stroke-width="0.8" fill="none" />
<line x1="103.60" y1="420.40" x2="106.20" y2="410.60" stroke="#4a5263" stroke-width="0.6" />
<rect x="582.00" y="411.60" width="15.40" height="8.80" fill="#3b4453" />
<text x="589.70" y="417.63" font-size="4.6" fill="#ffffff" font-weight="bold" text-anchor="middle" textLength="12.60" lengthAdjust="spacingAndGlyphs" stroke="#ffffff" stroke-width="0.1" >PAPER</text>
<rect x="599.00" y="411.60" width="8.60" height="8.80" fill="#3d7ac8" />
<path d="M601 413.0 v6 h5 M602.6 417.4 h0.1" stroke="#e8edf4" stroke-width="0.8" fill="none" />
<circle cx="613.00" cy="416.00" r="2.60" stroke="#c9ced6" stroke-width="0.7" fill="none" />
<path d="M613 416.0 l2.4 -1.6" stroke="#58a6e8" stroke-width="0.7" fill="none" />
<path d="M620.00 415.65 L622.00 415.65 L621.00 416.95 Z" fill="#c9ced6"/>
<path d="M627 418.6 l3.4 -5.6 M627 418.6 h4.4" stroke="#c9ced6" stroke-width="0.7" fill="none" />
<path d="M636.00 415.65 L638.00 415.65 L637.00 416.95 Z" fill="#c9ced6"/>
<rect x="641.80" y="411.60" width="9.00" height="8.80" fill="#3d7ac8" />
<path d="M643.6 418.6 l5 -5.2 M643.6 418.6 h5.4" stroke="#e8edf4" stroke-width="0.8" fill="none" />
<rect x="651.40" y="411.60" width="9.60" height="8.80" fill="#3d7ac8" />
<rect x="653.60" y="413.40" width="5.00" height="5.00" fill="none" stroke="#e8edf4" stroke-width="0.8"/>
<rect x="652.80" y="412.60" width="1.60" height="1.60" fill="#e8edf4" />
<path d="M664.00 415.65 L666.00 415.65 L665.00 416.95 Z" fill="#c9ced6"/>
<path d="M670.4 413.2 h5.6 v5.6 h-5.6 z M670.4 413.2 l5.6 5.6 M676 413.2 l-5.6 5.6" stroke="#c9ced6" stroke-width="0.6" fill="none" />
<path d="M680.4 419.0 l2.4 -6 l2.4 6 M681.4 417.0 h3.6" stroke="#e3e6ea" stroke-width="0.9" fill="none" />
<path d="M684.4 413.0 l2 2" stroke="#c9ced6" stroke-width="0.7" fill="none" />
<path d="M690.0 419.0 l2.4 -6 l2.4 6 M691.0 417.0 h3.6" stroke="#e3e6ea" stroke-width="0.9" fill="none" />
<path d="M694.0 413.0 l2 2" stroke="#c9ced6" stroke-width="0.7" fill="none" />
<circle cx="703.40" cy="416.00" r="1.90" stroke="#e3e6ea" stroke-width="1.2" fill="none" />
<line x1="705.80" y1="416.00" x2="706.80" y2="416.00" stroke="#e3e6ea" stroke-width="0.9" />
<line x1="705.10" y1="417.70" x2="705.80" y2="418.40" stroke="#e3e6ea" stroke-width="0.9" />
<line x1="703.40" y1="418.40" x2="703.40" y2="419.40" stroke="#e3e6ea" stroke-width="0.9" />
<line x1="701.70" y1="417.70" x2="701.00" y2="418.40" stroke="#e3e6ea" stroke-width="0.9" />
<line x1="701.00" y1="416.00" x2="700.00" y2="416.00" stroke="#e3e6ea" stroke-width="0.9" />
<line x1="701.70" y1="414.30" x2="701.00" y2="413.60" stroke="#e3e6ea" stroke-width="0.9" />
<line x1="703.40" y1="413.60" x2="703.40" y2="412.60" stroke="#e3e6ea" stroke-width="0.9" />
<line x1="705.10" y1="414.30" x2="705.80" y2="413.60" stroke="#e3e6ea" stroke-width="0.9" />
<path d="M711.40 415.65 L713.40 415.65 L712.40 416.95 Z" fill="#c9ced6"/>
<path d="M717 416.0 h6.4 M720.2 412.8 v6.4" stroke="#e3e6ea" stroke-width="0.9" fill="none" />
<circle cx="730.00" cy="415.00" r="1.80" stroke="#c9ced6" stroke-width="0.7" fill="none" />
<path d="M732.6 413.0 v6 M728 419.0 h3" stroke="#c9ced6" stroke-width="0.6" fill="none" />
<rect x="738.20" y="413.40" width="5.60" height="4.20" fill="#dfe3e8" />
<rect x="739.00" y="417.60" width="4.00" height="1.60" fill="#f0c24b" />
<rect x="742.00" y="412.60" width="2.40" height="2.40" fill="#58a6e8" />
<rect x="749.00" y="413.00" width="6.40" height="5.20" fill="#dfe3e8" />
<rect x="750.00" y="414.00" width="3.00" height="2.20" fill="#e0605a" />
<rect x="753.00" y="416.20" width="2.00" height="1.60" fill="#58a6e8" />
<rect x="760.00" y="413.40" width="6.00" height="5.00" fill="none" stroke="#dfe3e8" stroke-width="0.8"/>
<rect x="762.60" y="414.80" width="2.60" height="2.00" fill="#dfe3e8" />
<path d="M771.6 413.8 h6 M771.6 416.0 h6 M771.6 418.2 h6" stroke="#e3e6ea" stroke-width="0.9" fill="none" />
<rect x="-4.00" y="421.80" width="788.00" height="21.20" fill="#1a1c22" />
<rect x="6.40" y="427.70" width="3.00" height="3.00" fill="#ffffff" />
<rect x="9.70" y="427.70" width="3.00" height="3.00" fill="#ffffff" />
<rect x="6.40" y="431.00" width="3.00" height="3.00" fill="#ffffff" />
<rect x="9.70" y="431.00" width="3.00" height="3.00" fill="#ffffff" />
<rect x="19.20" y="423.00" width="117.60" height="20.00" fill="#f4f4f5" />
<circle cx="28.80" cy="429.80" r="2.10" stroke="#333" stroke-width="0.7" fill="none" />
<line x1="27.20" y1="431.40" x2="24.90" y2="433.60" stroke="#333" stroke-width="0.8" />
<text x="36.00" y="433.50" font-size="6.2" fill="#444" textLength="8.90" lengthAdjust="spacingAndGlyphs" stroke="#444" stroke-width="0.1" >Ara</text>
<path d="M117 426.4 C117.69 429.62 118.38 430.31 121.6 431 C118.38 431.69 117.69 432.38 117 435.6 C116.31 432.38 115.62 431.69 112.4 431 C115.62 430.31 116.31 429.62 117 426.4 Z" stroke="none" stroke-width="0" fill="#f5b73a" />
<path d="M125.4 430.0 C125.79 431.82000000000005 126.18 432.21000000000004 128.0 432.6 C126.18 432.99 125.79 433.38 125.4 435.20000000000005 C125.01 433.38 124.62 432.99 122.80000000000001 432.6 C124.62 432.21000000000004 125.01 431.82000000000005 125.4 430.0 Z" stroke="none" stroke-width="0" fill="#f0c24b" />
<path d="M109.4 432.0 C109.64 433.12 109.88000000000001 433.36 111.0 433.6 C109.88000000000001 433.84000000000003 109.64 434.08000000000004 109.4 435.20000000000005 C109.16000000000001 434.08000000000004 108.92 433.84000000000003 107.80000000000001 433.6 C108.92 433.36 109.16000000000001 433.12 109.4 432.0 Z" stroke="none" stroke-width="0" fill="#3d8ed8" />
<path d="M123 425.0 C123.21 425.97999999999996 123.42 426.19 124.4 426.4 C123.42 426.60999999999996 123.21 426.82 123 427.79999999999995 C122.79 426.82 122.58 426.60999999999996 121.6 426.4 C122.58 426.19 122.79 425.97999999999996 123 425.0 Z" stroke="none" stroke-width="0" fill="#e86a5a" />
<path d="M129.6 433.40000000000003 C129.78 434.24 129.96 434.42 130.79999999999998 434.6 C129.96 434.78000000000003 129.78 434.96000000000004 129.6 435.8 C129.42 434.96000000000004 129.23999999999998 434.78000000000003 128.4 434.6 C129.23999999999998 434.42 129.42 434.24 129.6 433.40000000000003 Z" stroke="none" stroke-width="0" fill="#3d8ed8" />
<circle cx="147.40" cy="431.00" r="4.40" stroke="none" stroke-width="0" fill="#e8453c" />
<path d="M147.4 431 L143.6 428.8 A4.4 4.4 0 0 0 145.2 434.8 Z" stroke="none" stroke-width="0" fill="#34a853" />
<path d="M147.4 431 L145.2 434.8 A4.4 4.4 0 0 0 151.8 431 Z" stroke="none" stroke-width="0" fill="#fbbc05" />
<circle cx="147.40" cy="431.00" r="1.90" stroke="#fff" stroke-width="0.6" fill="#4285f4" />
<rect x="157.40" y="421.80" width="19.60" height="17.20" fill="#35383f" />
<rect x="162.80" y="426.20" width="9.20" height="9.60" fill="url(#acad)" rx="0.8"/>
<text x="167.40" y="432.60" font-size="6.2" fill="#fff" font-weight="bold" text-anchor="middle" stroke="#fff" stroke-width="0.1" >A</text>
<rect x="165.00" y="433.80" width="4.80" height="0.90" fill="#fff" opacity="0.75"/>
<ellipse cx="187.6" cy="431.2" rx="5.2" ry="4.2" fill="#d8dde4" stroke="#8f98a6" stroke-width="0.4"/>
<circle cx="185.40" cy="430.00" r="1.00" stroke="none" stroke-width="0" fill="#e0605a" />
<circle cx="188.40" cy="429.20" r="1.00" stroke="none" stroke-width="0" fill="#f0c24b" />
<circle cx="190.40" cy="431.60" r="1.00" stroke="none" stroke-width="0" fill="#5cc26a" />
<circle cx="186.40" cy="433.00" r="1.00" stroke="none" stroke-width="0" fill="#58a6e8" />
<path d="M189.6 427 l3.2 -2 l0.8 1 l-3 2.4 z" stroke="none" stroke-width="0" fill="#c9a06a" />
<ellipse cx="207" cy="431" rx="4.4" ry="4.8" fill="#e8212e"/>
<ellipse cx="207" cy="431" rx="2" ry="3.3" fill="#1a1c22"/>
<rect x="139.40" y="437.80" width="16.20" height="1.20" fill="#76b9ed" />
<rect x="157.60" y="437.80" width="18.40" height="1.20" fill="#76b9ed" />
<rect x="179.00" y="437.80" width="17.40" height="1.20" fill="#76b9ed" />
<rect x="198.60" y="437.80" width="17.00" height="1.20" fill="#76b9ed" />
<path d="M714.6 431.6 l2.8 -2.6 l2.8 2.6" stroke="#e3e6ea" stroke-width="0.7" fill="none" />
<path d="M723 429.6 h1.6 l2 -1.8 v6 l-2 -1.8 h-1.6 z" stroke="none" stroke-width="0" fill="#e3e6ea" />
<path d="M728 429.4 l2 2.4 M730 429.4 l-2 2.4" stroke="#e3e6ea" stroke-width="0.5" fill="none" />
<text x="745.00" y="429.00" font-size="4.8" fill="#ffffff" text-anchor="middle" textLength="10.60" lengthAdjust="spacingAndGlyphs" stroke="#ffffff" stroke-width="0.1" >20:51</text>
<text x="745.00" y="436.10" font-size="4.8" fill="#ffffff" text-anchor="middle" textLength="21.00" lengthAdjust="spacingAndGlyphs" stroke="#ffffff" stroke-width="0.1" >12.04.2026</text>
<path d="M763.4 427.4 h7 v5 h-3.6 l-1.6 1.8 v-1.8 h-1.8 z" stroke="#e3e6ea" stroke-width="0.7" fill="none" />
</svg>
</body>
</html>
